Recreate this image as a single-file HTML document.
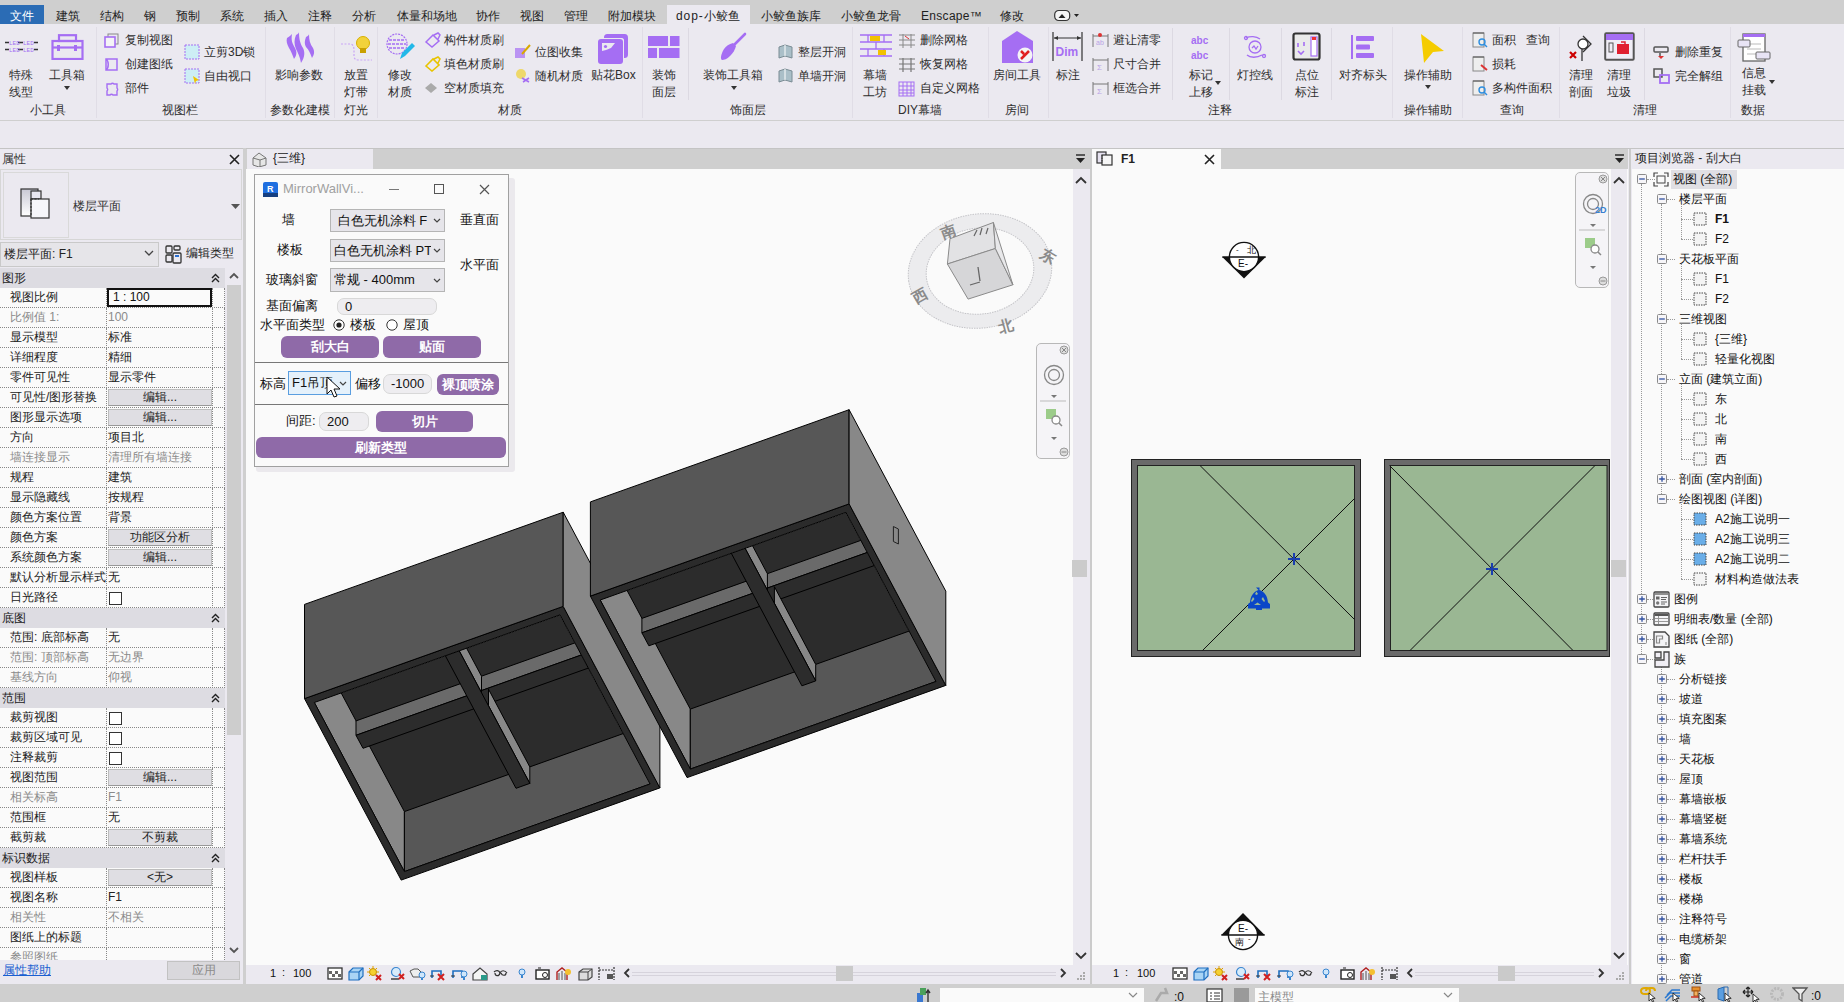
<!DOCTYPE html><html><head><meta charset="utf-8"><style>
html,body{margin:0;padding:0;width:1844px;height:1002px;overflow:hidden;background:#ebe9f0;}
body{position:relative;font-family:"Liberation Sans",sans-serif;font-size:12px;color:#1e1e1e;}
div,svg{position:absolute;}
.g{color:#8a8a8a}
.b{font-weight:bold}
</style></head><body>
<div style="left:0px;top:0px;width:1844px;height:24px;background:#cfcfcf"></div>
<div style="left:0px;top:5px;width:44px;height:19px;background:#2b6cb5"></div>
<div style="left:10px;top:8px;line-height:16px;color:#fff">文件</div>
<div style="left:667px;top:5px;width:83px;height:20px;background:#ebe9f0"></div>
<div style="left:56px;top:8px;line-height:16px;font-size:12px">建筑</div>
<div style="left:100px;top:8px;line-height:16px;font-size:12px">结构</div>
<div style="left:144px;top:8px;line-height:16px;font-size:12px">钢</div>
<div style="left:176px;top:8px;line-height:16px;font-size:12px">预制</div>
<div style="left:220px;top:8px;line-height:16px;font-size:12px">系统</div>
<div style="left:264px;top:8px;line-height:16px;font-size:12px">插入</div>
<div style="left:308px;top:8px;line-height:16px;font-size:12px">注释</div>
<div style="left:352px;top:8px;line-height:16px;font-size:12px">分析</div>
<div style="left:397px;top:8px;line-height:16px;font-size:12px">体量和场地</div>
<div style="left:476px;top:8px;line-height:16px;font-size:12px">协作</div>
<div style="left:520px;top:8px;line-height:16px;font-size:12px">视图</div>
<div style="left:564px;top:8px;line-height:16px;font-size:12px">管理</div>
<div style="left:608px;top:8px;line-height:16px;font-size:12px">附加模块</div>
<div style="left:676px;top:8px;line-height:16px;font-size:12px"><span style="letter-spacing:0.9px">dop-</span>小鲛鱼</div>
<div style="left:761px;top:8px;line-height:16px;font-size:12px">小鲛鱼族库</div>
<div style="left:841px;top:8px;line-height:16px;font-size:12px">小鲛鱼龙骨</div>
<div style="left:921px;top:8px;line-height:16px;font-size:12px"><span style="letter-spacing:0.3px">Enscape™</span></div>
<div style="left:1000px;top:8px;line-height:16px;font-size:12px">修改</div>
<div style="left:0px;top:120px;width:1844px;height:1px;background:#cfcfcf"></div>
<div style="left:0px;top:148px;width:1844px;height:1px;background:#c4c4c4"></div>
<svg style="left:1054px;top:8px" width="26" height="14" viewBox="0 0 26 14"><rect x="0.7" y="2.5" width="15" height="10" rx="4" fill="#f4f4f4" stroke="#333" stroke-width="1.2"/><path d="M4.5 10l3.5-4 3.5 4z" fill="#222"/><path d="M20 6h5l-2.5 3z" fill="#222"/></svg>
<svg style="left:4px;top:38px" width="34" height="16" viewBox="0 0 34 16"><g fill="none" stroke="#333" stroke-width="1.5"><path d="M1 4.5h4M14 4.5h5M30 4.5h4M1 11.5h4M14 11.5h5M30 11.5h4"/></g><g font-family="Liberation Mono" font-size="6" fill="#a56ef3"><text x="5" y="7">LED</text><text x="19" y="7">LED</text><text x="5" y="14">LED</text><text x="19" y="14">LED</text></g></svg>
<div style="left:9px;top:67px;line-height:16px;color:#2e2e2e">特殊</div>
<div style="left:9px;top:84px;line-height:16px;color:#2e2e2e">线型</div>
<svg style="left:51px;top:34px" width="33" height="26" viewBox="0 0 33 26"><g fill="none" stroke="#a56ef3" stroke-width="2.2"><rect x="1.5" y="7" width="30" height="18"/><rect x="8" y="1.2" width="17" height="5.8"/><path d="M1.5 13.5h30"/></g><rect x="6" y="11" width="3" height="6" fill="#a56ef3"/><rect x="23" y="11" width="3" height="6" fill="#a56ef3"/></svg>
<div style="left:49px;top:67px;line-height:16px;color:#2e2e2e">工具箱</div>
<svg style="left:64px;top:86px" width="6" height="4" viewBox="0 0 6 4"><path d="M0 0h6l-3 4z" fill="#333"/></svg>
<svg style="left:104px;top:33px" width="15" height="15" viewBox="0 0 15 15"><rect x="4" y="1" width="10" height="10" fill="none" stroke="#888" stroke-width="1"/><rect x="1" y="4" width="10" height="10" fill="#f4f3f6" stroke="#a56ef3" stroke-width="1.6"/></svg>
<div style="left:125px;top:32px;line-height:16px;color:#2e2e2e">复制视图</div>
<svg style="left:104px;top:57px" width="15" height="15" viewBox="0 0 15 15"><path d="M2 2h11v11H2z M2 2c3 2 3 9 0 11" fill="none" stroke="#a56ef3" stroke-width="1.5"/></svg>
<div style="left:125px;top:56px;line-height:16px;color:#2e2e2e">创建图纸</div>
<svg style="left:104px;top:81px" width="15" height="15" viewBox="0 0 15 15"><path d="M3 3h4a2 2 0 0 1 3 0h3v4a2 2 0 0 1 0 3v4h-4a2 2 0 0 0-3 0H3v-4a2 2 0 0 0 0-3z" fill="none" stroke="#a56ef3" stroke-width="1.4"/></svg>
<div style="left:125px;top:80px;line-height:16px;color:#2e2e2e">部件</div>
<svg style="left:184px;top:44px" width="16" height="16" viewBox="0 0 16 16"><rect x="1" y="1" width="14" height="14" fill="#cdeef5" stroke="#a56ef3" stroke-width="1" stroke-dasharray="2 1"/></svg>
<div style="left:204px;top:44px;line-height:16px;color:#2e2e2e">立剪3D锁</div>
<svg style="left:184px;top:68px" width="16" height="16" viewBox="0 0 16 16"><rect x="1" y="1" width="14" height="14" fill="#cdeef5" stroke="#a56ef3" stroke-width="1" stroke-dasharray="2 1"/><path d="M9 8l6 4-3 1-1 3z" fill="#f2c200"/></svg>
<div style="left:204px;top:68px;line-height:16px;color:#2e2e2e">自由视口</div>
<svg style="left:283px;top:32px" width="32" height="31" viewBox="0 0 32 31"><g fill="#a56ef3"><path d="M4 6c3-2 4-3 5-4-1 6 0 9 3 14 2 4 2 7-1 11-2-5-3-8-5-11-2-4-3-7-2-10z"/><path d="M13 3c2-1 3-2 3-3 0 7 1 11 4 16 2 4 2 9-2 15-1-6-3-10-5-14-2-5-2-9 0-14z"/><path d="M23 5c2-1 3-2 3-3 0 6 1 10 4 14 2 4 1 7-1 10-2-5-3-8-6-11-2-4-1-7 0-10z"/></g></svg>
<div style="left:275px;top:67px;line-height:16px;color:#2e2e2e">影响参数</div>
<svg style="left:340px;top:35px" width="33" height="27" viewBox="0 0 33 27"><path d="M1 9h9c3 0 4 3 4 6v6c0 3 2 4 5 4h13" fill="none" stroke="#c9a6f6" stroke-width="1.2" stroke-dasharray="2 1.5"/><circle cx="23" cy="8" r="6.5" fill="#f2d23a" stroke="#d8b000"/><rect x="20" y="13" width="6" height="5" fill="#c9a000"/></svg>
<div style="left:344px;top:67px;line-height:16px;color:#2e2e2e">放置</div>
<div style="left:344px;top:84px;line-height:16px;color:#2e2e2e">灯带</div>
<svg style="left:386px;top:33px" width="30" height="28" viewBox="0 0 30 28"><circle cx="11" cy="11" r="10" fill="none" stroke="#a56ef3" stroke-width="1.2" stroke-dasharray="2 1"/><path d="M3 7h16M2 11h18M3 15h16" stroke="#a56ef3" stroke-width="1.4" stroke-dasharray="3 1"/><path d="M14 26l2-6 10-10 3 3-10 10z" fill="#22b8e8"/></svg>
<div style="left:388px;top:67px;line-height:16px;color:#2e2e2e">修改</div>
<div style="left:388px;top:84px;line-height:16px;color:#2e2e2e">材质</div>
<svg style="left:424px;top:32px" width="17" height="16" viewBox="0 0 17 16"><path d="M2 10l7-7 6 6-7 6z M10 3l4-2 2 2-2 4" fill="none" stroke="#a56ef3" stroke-width="1.5"/></svg>
<div style="left:444px;top:32px;line-height:16px;color:#2e2e2e">构件材质刷</div>
<svg style="left:424px;top:56px" width="17" height="16" viewBox="0 0 17 16"><path d="M2 10l7-7 6 6-7 6z M10 3l4-2 2 2-2 4" fill="none" stroke="#e8c400" stroke-width="1.6"/></svg>
<div style="left:444px;top:56px;line-height:16px;color:#2e2e2e">填色材质刷</div>
<svg style="left:424px;top:82px" width="14" height="12" viewBox="0 0 14 12"><path d="M7 1l6 5-6 5-6-5z" fill="#aaa"/></svg>
<div style="left:444px;top:80px;line-height:16px;color:#2e2e2e">空材质填充</div>
<svg style="left:514px;top:44px" width="17" height="15" viewBox="0 0 17 15"><rect x="1" y="4" width="10" height="10" fill="#a56ef3" opacity=".7"/><path d="M8 10l8-9" stroke="#d8a800" stroke-width="2"/></svg>
<div style="left:535px;top:44px;line-height:16px;color:#2e2e2e">位图收集</div>
<svg style="left:514px;top:68px" width="17" height="15" viewBox="0 0 17 15"><circle cx="7" cy="6" r="5" fill="#eed86a"/><path d="M8 10l7 4M9 14l6-4" stroke="#a56ef3" stroke-width="1.6"/></svg>
<div style="left:535px;top:68px;line-height:16px;color:#2e2e2e">随机材质</div>
<svg style="left:597px;top:32px" width="32" height="32" viewBox="0 0 32 32"><path d="M7 6c0-3 1-4 4-4h16c3 0 4 1 4 4v16c0 3-1 4-4 4V8c0-1-1-2-2-2z" fill="#a56ef3"/><rect x="1" y="7" width="25" height="25" rx="3" fill="#a56ef3"/><path d="M5 11h13l-4 5c-2 1-3 1-5 2l-4 1z" fill="#ebe9f0"/><circle cx="8.5" cy="14.5" r="1.6" fill="#a56ef3"/></svg>
<div style="left:591px;top:67px;line-height:16px;color:#2e2e2e">贴花Box</div>
<svg style="left:648px;top:36px" width="32" height="23" viewBox="0 0 32 23"><g fill="#a56ef3"><rect x="0" y="0" width="20" height="10"/><rect x="22" y="0" width="9.5" height="10"/><rect x="0" y="12" width="9" height="10"/><rect x="11" y="12" width="20.5" height="10"/></g></svg>
<div style="left:652px;top:67px;line-height:16px;color:#2e2e2e">装饰</div>
<div style="left:652px;top:84px;line-height:16px;color:#2e2e2e">面层</div>
<svg style="left:719px;top:32px" width="28" height="30" viewBox="0 0 28 30"><path d="M3 28c-2-1-1-6 2-11 2-3 5-5 9-6l3 3c-1 4-3 7-6 10-3 3-6 4-8 4z" fill="#a56ef3"/><path d="M14 14L26 2" stroke="#a56ef3" stroke-width="2.6" stroke-linecap="round"/></svg>
<div style="left:703px;top:67px;line-height:16px;color:#2e2e2e">装饰工具箱</div>
<svg style="left:731px;top:86px" width="6" height="4" viewBox="0 0 6 4"><path d="M0 0h6l-3 4z" fill="#333"/></svg>
<svg style="left:778px;top:44px" width="15" height="15" viewBox="0 0 15 15"><path d="M1 3l6-2 7 2v11l-7-2-6 2z" fill="#aabfc8" stroke="#7a8c94"/><path d="M7 1v11" stroke="#fff"/></svg>
<div style="left:798px;top:44px;line-height:16px;color:#2e2e2e">整层开洞</div>
<svg style="left:778px;top:68px" width="15" height="15" viewBox="0 0 15 15"><path d="M1 3l6-2 7 2v11l-7-2-6 2z" fill="#aabfc8" stroke="#7a8c94"/><path d="M7 1v11" stroke="#fff"/></svg>
<div style="left:798px;top:68px;line-height:16px;color:#2e2e2e">单墙开洞</div>
<svg style="left:860px;top:33px" width="32" height="27" viewBox="0 0 32 27"><g stroke="#a56ef3" stroke-width="1.3" fill="none"><path d="M0 2h32M0 9h32M0 16h32M0 23h32M8 2v7M24 2v7M16 9v7M8 16v7M24 16v7"/></g><rect x="10" y="3" width="10" height="5" fill="#f2c200"/><rect x="18" y="17" width="8" height="5" fill="#f2c200"/></svg>
<div style="left:863px;top:67px;line-height:16px;color:#2e2e2e">幕墙</div>
<div style="left:863px;top:84px;line-height:16px;color:#2e2e2e">工坊</div>
<svg style="left:898px;top:33px" width="18" height="15" viewBox="0 0 18 15"><g stroke="#888" fill="none" stroke-width="1"><path d="M1 2h16M1 7h16M1 12h16M5 1v14M13 1v14"/></g><path d="M7 3l4 3" stroke="#d33"/></svg>
<div style="left:920px;top:32px;line-height:16px;color:#2e2e2e">删除网格</div>
<svg style="left:898px;top:57px" width="18" height="15" viewBox="0 0 18 15"><g stroke="#777" fill="none" stroke-width="1.2"><path d="M1 2h16M1 7h16M1 12h16M5 1v14M13 1v14"/></g></svg>
<div style="left:920px;top:56px;line-height:16px;color:#2e2e2e">恢复网格</div>
<svg style="left:898px;top:81px" width="18" height="16" viewBox="0 0 18 16"><g stroke="#a56ef3" fill="none" stroke-width="1"><rect x="1" y="1" width="15" height="14"/><path d="M1 5h15M1 9h15M1 12h15M5 1v14M9 1v14M13 1v14"/></g></svg>
<div style="left:920px;top:80px;line-height:16px;color:#2e2e2e">自定义网格</div>
<svg style="left:1000px;top:30px" width="34" height="33" viewBox="0 0 34 33"><path d="M17 1L33 11v22H2V11z" fill="#a56ef3"/><circle cx="25" cy="25" r="7.5" fill="#f4f3f6"/><path d="M21 29l8-8M21 21l3 3" stroke="#e02020" stroke-width="2.5"/></svg>
<div style="left:993px;top:67px;line-height:16px;color:#2e2e2e">房间工具</div>
<svg style="left:1052px;top:31px" width="31" height="30" viewBox="0 0 31 30"><path d="M1 1v29M30 1v29M2 7h27" stroke="#333" stroke-width="1.2" fill="none"/><path d="M2 7l4-2v4zM29 7l-4-2v4z" fill="#333"/><text x="3.5" y="25" font-family="Liberation Sans" font-weight="bold" font-size="12" fill="#a56ef3">Dim</text></svg>
<div style="left:1056px;top:67px;line-height:16px;color:#2e2e2e">标注</div>
<svg style="left:1092px;top:32px" width="17" height="16" viewBox="0 0 17 16"><path d="M1 2v13M16 2v13M1 4h15" stroke="#777" fill="none"/><circle cx="8" cy="3" r="2" fill="#d33"/><text x="4" y="13" font-size="7" fill="#b9a3e6">ab</text></svg>
<div style="left:1113px;top:32px;line-height:16px;color:#2e2e2e">避让清零</div>
<svg style="left:1092px;top:56px" width="17" height="16" viewBox="0 0 17 16"><path d="M1 2v13M16 2v13M1 4h15" stroke="#777" fill="none"/><text x="5" y="14" font-size="8" fill="#b9a3e6">Σ</text></svg>
<div style="left:1113px;top:56px;line-height:16px;color:#2e2e2e">尺寸合并</div>
<svg style="left:1092px;top:80px" width="17" height="16" viewBox="0 0 17 16"><path d="M1 2v13M16 2v13M1 4h15" stroke="#777" fill="none"/><text x="5" y="14" font-size="8" fill="#b9a3e6">Σ</text></svg>
<div style="left:1113px;top:80px;line-height:16px;color:#2e2e2e">框选合并</div>
<svg style="left:1191px;top:33px" width="20" height="28" viewBox="0 0 20 28"><g font-family="Liberation Sans" font-weight="bold" font-size="10" fill="#a56ef3"><text x="0" y="11">abc</text><text x="0" y="26">abc</text></g></svg>
<div style="left:1189px;top:67px;line-height:16px;color:#2e2e2e">标记</div>
<div style="left:1189px;top:84px;line-height:16px;color:#2e2e2e">上移</div>
<svg style="left:1215px;top:81px" width="6" height="4" viewBox="0 0 6 4"><path d="M0 0h6l-3 4z" fill="#333"/></svg>
<svg style="left:1243px;top:35px" width="24" height="24" viewBox="0 0 24 24"><g fill="none" stroke="#a56ef3" stroke-width="1.3"><circle cx="12" cy="12" r="6"/><path d="M3 3c4-2 10-2 14 1M4 20c3 3 10 3 15 0"/><circle cx="3" cy="3" r="1.5"/><circle cx="21" cy="21" r="1.5"/><path d="M9 13l2-2 2 3 2-3"/></g></svg>
<div style="left:1237px;top:67px;line-height:16px;color:#2e2e2e">灯控线</div>
<svg style="left:1292px;top:32px" width="29" height="29" viewBox="0 0 29 29"><rect x="1.5" y="1.5" width="26" height="26" rx="2" fill="#eaeaea" stroke="#333" stroke-width="2.2"/><rect x="19" y="5" width="6" height="19" fill="#fff" stroke="#a56ef3" stroke-width="1.2"/><rect x="20" y="5" width="4" height="3" fill="#e33"/><path d="M6 11v4M12 10v4M6 19l3 3 3-3" stroke="#a56ef3" stroke-width="1.6" fill="none"/></svg>
<div style="left:1295px;top:67px;line-height:16px;color:#2e2e2e">点位</div>
<div style="left:1295px;top:84px;line-height:16px;color:#2e2e2e">标注</div>
<svg style="left:1351px;top:35px" width="24" height="24" viewBox="0 0 24 24"><rect x="0" y="0" width="2" height="24" fill="#a56ef3"/><g fill="#a56ef3"><rect x="5" y="1" width="18" height="5" rx="1"/><rect x="5" y="9.5" width="14" height="5" rx="1"/><rect x="5" y="18" width="18" height="5" rx="1"/></g></svg>
<div style="left:1339px;top:67px;line-height:16px;color:#2e2e2e">对齐标头</div>
<svg style="left:1420px;top:33px" width="25" height="30" viewBox="0 0 25 30"><path d="M1 1l23 17-11 1-9 11z" fill="#f5cc00"/></svg>
<div style="left:1404px;top:67px;line-height:16px;color:#2e2e2e">操作辅助</div>
<svg style="left:1425px;top:85px" width="6" height="4" viewBox="0 0 6 4"><path d="M0 0h6l-3 4z" fill="#333"/></svg>
<svg style="left:1472px;top:32px" width="16" height="16" viewBox="0 0 16 16"><rect x="1" y="1" width="11" height="14" fill="#eee" stroke="#888"/><path d="M1 1h11" stroke="#555"/><circle cx="10" cy="10" r="3" fill="none" stroke="#2e8ee0" stroke-width="1.4"/><path d="M12 12l3 3" stroke="#2e8ee0" stroke-width="1.4"/></svg>
<div style="left:1492px;top:32px;line-height:16px;color:#2e2e2e">面积&nbsp;&nbsp;&nbsp;查询</div>
<svg style="left:1472px;top:56px" width="16" height="16" viewBox="0 0 16 16"><rect x="1" y="1" width="11" height="14" fill="#eee" stroke="#888"/><path d="M1 1h11" stroke="#555"/><path d="M9 9l6 5" stroke="#d33" stroke-width="2"/></svg>
<div style="left:1492px;top:56px;line-height:16px;color:#2e2e2e">损耗</div>
<svg style="left:1472px;top:80px" width="16" height="16" viewBox="0 0 16 16"><rect x="1" y="1" width="11" height="14" fill="#eee" stroke="#888"/><path d="M1 1h11" stroke="#555"/><circle cx="10" cy="10" r="3" fill="none" stroke="#2e8ee0" stroke-width="1.4"/><path d="M12 12l3 3" stroke="#2e8ee0" stroke-width="1.4"/></svg>
<div style="left:1492px;top:80px;line-height:16px;color:#2e2e2e">多构件面积</div>
<svg style="left:1568px;top:34px" width="26" height="27" viewBox="0 0 26 27"><circle cx="15" cy="10" r="5" fill="#fff" stroke="#333" stroke-width="1.3"/><path d="M15 2l8 8-8 8" fill="none" stroke="#333" stroke-width="1.3"/><path d="M14 15v12" stroke="#333" stroke-width="1.3"/><path d="M2 18l6 6M8 18l-6 6" stroke="#c00" stroke-width="2.2"/></svg>
<div style="left:1569px;top:67px;line-height:16px;color:#2e2e2e">清理</div>
<div style="left:1569px;top:84px;line-height:16px;color:#2e2e2e">剖面</div>
<svg style="left:1604px;top:32px" width="31" height="29" viewBox="0 0 31 29"><rect x="1.2" y="1.2" width="28.5" height="26.5" rx="1" fill="#f0eef6" stroke="#555" stroke-width="2"/><rect x="2" y="2" width="27" height="6" fill="#a56ef3"/><rect x="5" y="11" width="4" height="9" fill="none" stroke="#555"/><rect x="13" y="12" width="12" height="10" fill="#e02030"/><path d="M17 10h4v3" fill="none" stroke="#e02030" stroke-width="1.5"/></svg>
<div style="left:1607px;top:67px;line-height:16px;color:#2e2e2e">清理</div>
<div style="left:1607px;top:84px;line-height:16px;color:#2e2e2e">垃圾</div>
<svg style="left:1653px;top:45px" width="18" height="14" viewBox="0 0 18 14"><rect x="1" y="2" width="14" height="5" rx="1" fill="none" stroke="#555" stroke-width="1.5"/><path d="M7 8v4" stroke="#555" stroke-width="1.5"/><path d="M5 11l3 3 3-3" fill="#d33"/></svg>
<div style="left:1675px;top:44px;line-height:16px;color:#2e2e2e">删除重复</div>
<svg style="left:1653px;top:68px" width="18" height="16" viewBox="0 0 18 16"><rect x="1" y="1" width="8" height="8" fill="none" stroke="#555" stroke-width="1.5"/><rect x="7" y="7" width="9" height="8" fill="none" stroke="#a56ef3" stroke-width="1.8"/></svg>
<div style="left:1675px;top:68px;line-height:16px;color:#2e2e2e">完全解组</div>
<svg style="left:1737px;top:32px" width="34" height="30" viewBox="0 0 34 30"><rect x="6" y="2" width="22" height="27" fill="#fff" stroke="#666" stroke-width="1.3"/><rect x="6" y="2" width="22" height="3" fill="#a56ef3"/><path d="M10 12h14M10 17h14M10 22h14" stroke="#bbb"/><rect x="1" y="8" width="12" height="7" rx="1" fill="#e8e4f5" stroke="#666"/><rect x="19" y="20" width="14" height="7" rx="1" fill="#e8e4f5" stroke="#666"/></svg>
<div style="left:1742px;top:65px;line-height:16px;color:#2e2e2e">信息</div>
<div style="left:1742px;top:82px;line-height:16px;color:#2e2e2e">挂载</div>
<svg style="left:1769px;top:80px" width="6" height="4" viewBox="0 0 6 4"><path d="M0 0h6l-3 4z" fill="#333"/></svg>
<div style="left:30px;top:102px;line-height:16px;color:#2e2e2e">小工具</div>
<div style="left:162px;top:102px;line-height:16px;color:#2e2e2e">视图栏</div>
<div style="left:270px;top:102px;line-height:16px;color:#2e2e2e">参数化建模</div>
<div style="left:344px;top:102px;line-height:16px;color:#2e2e2e">灯光</div>
<div style="left:498px;top:102px;line-height:16px;color:#2e2e2e">材质</div>
<div style="left:730px;top:102px;line-height:16px;color:#2e2e2e">饰面层</div>
<div style="left:898px;top:102px;line-height:16px;color:#2e2e2e">DIY幕墙</div>
<div style="left:1005px;top:102px;line-height:16px;color:#2e2e2e">房间</div>
<div style="left:1208px;top:102px;line-height:16px;color:#2e2e2e">注释</div>
<div style="left:1404px;top:102px;line-height:16px;color:#2e2e2e">操作辅助</div>
<div style="left:1500px;top:102px;line-height:16px;color:#2e2e2e">查询</div>
<div style="left:1633px;top:102px;line-height:16px;color:#2e2e2e">清理</div>
<div style="left:1741px;top:102px;line-height:16px;color:#2e2e2e">数据</div>
<div style="left:96px;top:27px;width:1px;height:91px;background:#e0dde6"></div>
<div style="left:265px;top:27px;width:1px;height:91px;background:#e0dde6"></div>
<div style="left:334px;top:27px;width:1px;height:91px;background:#e0dde6"></div>
<div style="left:377px;top:27px;width:1px;height:91px;background:#e0dde6"></div>
<div style="left:642px;top:27px;width:1px;height:91px;background:#e0dde6"></div>
<div style="left:852px;top:27px;width:1px;height:91px;background:#e0dde6"></div>
<div style="left:988px;top:27px;width:1px;height:91px;background:#e0dde6"></div>
<div style="left:1048px;top:27px;width:1px;height:91px;background:#e0dde6"></div>
<div style="left:1392px;top:27px;width:1px;height:91px;background:#e0dde6"></div>
<div style="left:1462px;top:27px;width:1px;height:91px;background:#e0dde6"></div>
<div style="left:1559px;top:27px;width:1px;height:91px;background:#e0dde6"></div>
<div style="left:1730px;top:27px;width:1px;height:91px;background:#e0dde6"></div>
<div style="left:688px;top:28px;width:1px;height:72px;background:#dcd9e2"></div>
<div style="left:1172px;top:28px;width:1px;height:72px;background:#dcd9e2"></div>
<div style="left:1229px;top:28px;width:1px;height:72px;background:#dcd9e2"></div>
<div style="left:1281px;top:28px;width:1px;height:72px;background:#dcd9e2"></div>
<div style="left:1331px;top:28px;width:1px;height:72px;background:#dcd9e2"></div>
<div style="left:1644px;top:28px;width:1px;height:72px;background:#dcd9e2"></div>
<div style="left:2px;top:151px;line-height:16px;color:#333">属性</div>
<svg style="left:229px;top:154px" width="11" height="11" viewBox="0 0 11 11"><path d="M1 1l9 9M10 1l-9 9" stroke="#222" stroke-width="1.6"/></svg>
<div style="left:0px;top:169px;width:242px;height:71px;border:1px solid #d6d6d6;box-sizing:border-box"></div>
<div style="left:3px;top:172px;width:66px;height:66px;border:1px solid #d9d9d9;box-sizing:border-box"></div>
<svg style="left:20px;top:188px" width="31" height="32" viewBox="0 0 31 32"><defs><linearGradient id="gA" x1="0" y1="0" x2="0" y2="1"><stop offset="0" stop-color="#c8c8d4"/><stop offset="1" stop-color="#fff"/></linearGradient></defs><rect x="1" y="1" width="17" height="27" fill="url(#gA)" stroke="#333" stroke-width="1.2"/><rect x="11" y="3" width="10" height="8" fill="#e8e6f0" stroke="#333" stroke-width="1.2"/><rect x="11" y="11" width="18" height="19" fill="#f6f6fa" stroke="#333" stroke-width="1.2"/><path d="M11 11v17M11 11h8" stroke="#333" stroke-dasharray="2 1.5" stroke-width="1.2"/></svg>
<div style="left:73px;top:198px;line-height:16px;color:#333">楼层平面</div>
<svg style="left:231px;top:204px" width="9" height="5" viewBox="0 0 9 5"><path d="M0 0h9l-4.5 5z" fill="#555"/></svg>
<div style="left:0px;top:242px;width:159px;height:25px;background:#e6e5e9;border:1px solid #c9c9c9;box-sizing:border-box"></div>
<div style="left:4px;top:246px;line-height:16px;color:#222">楼层平面: F1</div>
<svg style="left:144px;top:250px" width="10" height="6" viewBox="0 0 10 6"><path d="M1 1l4 4 4-4" fill="none" stroke="#444" stroke-width="1.3"/></svg>
<svg style="left:165px;top:245px" width="17" height="19" viewBox="0 0 17 19"><g fill="none" stroke="#333" stroke-width="1.3"><rect x="1" y="1" width="6" height="7" rx="1"/><rect x="9" y="1" width="6" height="4" rx="1"/><rect x="1" y="10" width="6" height="7" rx="1"/><rect x="8" y="8" width="8" height="10" rx="1"/></g><rect x="10" y="10" width="4" height="2" fill="#2a6fd0"/></svg>
<div style="left:186px;top:245px;line-height:16px;color:#222">编辑类型</div>
<div style="left:0px;top:268px;width:225px;height:693px;background:#fafafa"></div>
<div style="left:0px;top:268px;width:225px;height:20px;background:#dddce2"></div>
<div style="left:2px;top:270px;line-height:16px;color:#222">图形</div>
<svg style="left:211px;top:273px" width="9" height="10" viewBox="0 0 9 10"><path d="M1 5l3.5-3.5L8 5M1 9l3.5-3.5L8 9" fill="none" stroke="#222" stroke-width="1.4"/></svg>
<div style="left:0;top:307px;width:225px;height:0;border-top:1px dotted #888"></div>
<div style="left:106px;top:288px;width:0;height:20px;border-left:1px dotted #888"></div>
<div style="left:212px;top:288px;width:0;height:20px;border-left:1px dotted #888"></div>
<div style="left:224px;top:288px;width:0;height:20px;border-left:1px dotted #888"></div>
<div style="left:10px;top:289px;line-height:16px;color:#222">视图比例</div>
<div style="left:107px;top:288px;width:105px;height:19px;background:#fafafa;border:2px solid #111;box-sizing:border-box"></div>
<div style="left:113px;top:289px;line-height:16px;color:#111">1 : 100</div>
<div style="left:0;top:327px;width:225px;height:0;border-top:1px dotted #888"></div>
<div style="left:106px;top:308px;width:0;height:20px;border-left:1px dotted #888"></div>
<div style="left:212px;top:308px;width:0;height:20px;border-left:1px dotted #888"></div>
<div style="left:224px;top:308px;width:0;height:20px;border-left:1px dotted #888"></div>
<div style="left:10px;top:309px;line-height:16px;color:#8a8a8a">比例值 1:</div>
<div style="left:108px;top:309px;line-height:16px;color:#8a8a8a">100</div>
<div style="left:0;top:347px;width:225px;height:0;border-top:1px dotted #888"></div>
<div style="left:106px;top:328px;width:0;height:20px;border-left:1px dotted #888"></div>
<div style="left:212px;top:328px;width:0;height:20px;border-left:1px dotted #888"></div>
<div style="left:224px;top:328px;width:0;height:20px;border-left:1px dotted #888"></div>
<div style="left:10px;top:329px;line-height:16px;color:#222">显示模型</div>
<div style="left:108px;top:329px;line-height:16px;color:#222">标准</div>
<div style="left:0;top:367px;width:225px;height:0;border-top:1px dotted #888"></div>
<div style="left:106px;top:348px;width:0;height:20px;border-left:1px dotted #888"></div>
<div style="left:212px;top:348px;width:0;height:20px;border-left:1px dotted #888"></div>
<div style="left:224px;top:348px;width:0;height:20px;border-left:1px dotted #888"></div>
<div style="left:10px;top:349px;line-height:16px;color:#222">详细程度</div>
<div style="left:108px;top:349px;line-height:16px;color:#222">精细</div>
<div style="left:0;top:387px;width:225px;height:0;border-top:1px dotted #888"></div>
<div style="left:106px;top:368px;width:0;height:20px;border-left:1px dotted #888"></div>
<div style="left:212px;top:368px;width:0;height:20px;border-left:1px dotted #888"></div>
<div style="left:224px;top:368px;width:0;height:20px;border-left:1px dotted #888"></div>
<div style="left:10px;top:369px;line-height:16px;color:#222">零件可见性</div>
<div style="left:108px;top:369px;line-height:16px;color:#222">显示零件</div>
<div style="left:0;top:407px;width:225px;height:0;border-top:1px dotted #888"></div>
<div style="left:106px;top:388px;width:0;height:20px;border-left:1px dotted #888"></div>
<div style="left:212px;top:388px;width:0;height:20px;border-left:1px dotted #888"></div>
<div style="left:224px;top:388px;width:0;height:20px;border-left:1px dotted #888"></div>
<div style="left:10px;top:389px;line-height:16px;color:#222">可见性/图形替换</div>
<div style="left:108px;top:389px;width:104px;height:17px;background:#dfdee3;border:1px solid #bdbdbd;border-bottom-color:#999;box-sizing:border-box"></div>
<div style="left:108px;top:389px;width:104px;line-height:17px;text-align:center;color:#222">编辑...</div>
<div style="left:0;top:427px;width:225px;height:0;border-top:1px dotted #888"></div>
<div style="left:106px;top:408px;width:0;height:20px;border-left:1px dotted #888"></div>
<div style="left:212px;top:408px;width:0;height:20px;border-left:1px dotted #888"></div>
<div style="left:224px;top:408px;width:0;height:20px;border-left:1px dotted #888"></div>
<div style="left:10px;top:409px;line-height:16px;color:#222">图形显示选项</div>
<div style="left:108px;top:409px;width:104px;height:17px;background:#dfdee3;border:1px solid #bdbdbd;border-bottom-color:#999;box-sizing:border-box"></div>
<div style="left:108px;top:409px;width:104px;line-height:17px;text-align:center;color:#222">编辑...</div>
<div style="left:0;top:447px;width:225px;height:0;border-top:1px dotted #888"></div>
<div style="left:106px;top:428px;width:0;height:20px;border-left:1px dotted #888"></div>
<div style="left:212px;top:428px;width:0;height:20px;border-left:1px dotted #888"></div>
<div style="left:224px;top:428px;width:0;height:20px;border-left:1px dotted #888"></div>
<div style="left:10px;top:429px;line-height:16px;color:#222">方向</div>
<div style="left:108px;top:429px;line-height:16px;color:#222">项目北</div>
<div style="left:0;top:467px;width:225px;height:0;border-top:1px dotted #888"></div>
<div style="left:106px;top:448px;width:0;height:20px;border-left:1px dotted #888"></div>
<div style="left:212px;top:448px;width:0;height:20px;border-left:1px dotted #888"></div>
<div style="left:224px;top:448px;width:0;height:20px;border-left:1px dotted #888"></div>
<div style="left:10px;top:449px;line-height:16px;color:#8a8a8a">墙连接显示</div>
<div style="left:108px;top:449px;line-height:16px;color:#8a8a8a">清理所有墙连接</div>
<div style="left:0;top:487px;width:225px;height:0;border-top:1px dotted #888"></div>
<div style="left:106px;top:468px;width:0;height:20px;border-left:1px dotted #888"></div>
<div style="left:212px;top:468px;width:0;height:20px;border-left:1px dotted #888"></div>
<div style="left:224px;top:468px;width:0;height:20px;border-left:1px dotted #888"></div>
<div style="left:10px;top:469px;line-height:16px;color:#222">规程</div>
<div style="left:108px;top:469px;line-height:16px;color:#222">建筑</div>
<div style="left:0;top:507px;width:225px;height:0;border-top:1px dotted #888"></div>
<div style="left:106px;top:488px;width:0;height:20px;border-left:1px dotted #888"></div>
<div style="left:212px;top:488px;width:0;height:20px;border-left:1px dotted #888"></div>
<div style="left:224px;top:488px;width:0;height:20px;border-left:1px dotted #888"></div>
<div style="left:10px;top:489px;line-height:16px;color:#222">显示隐藏线</div>
<div style="left:108px;top:489px;line-height:16px;color:#222">按规程</div>
<div style="left:0;top:527px;width:225px;height:0;border-top:1px dotted #888"></div>
<div style="left:106px;top:508px;width:0;height:20px;border-left:1px dotted #888"></div>
<div style="left:212px;top:508px;width:0;height:20px;border-left:1px dotted #888"></div>
<div style="left:224px;top:508px;width:0;height:20px;border-left:1px dotted #888"></div>
<div style="left:10px;top:509px;line-height:16px;color:#222">颜色方案位置</div>
<div style="left:108px;top:509px;line-height:16px;color:#222">背景</div>
<div style="left:0;top:547px;width:225px;height:0;border-top:1px dotted #888"></div>
<div style="left:106px;top:528px;width:0;height:20px;border-left:1px dotted #888"></div>
<div style="left:212px;top:528px;width:0;height:20px;border-left:1px dotted #888"></div>
<div style="left:224px;top:528px;width:0;height:20px;border-left:1px dotted #888"></div>
<div style="left:10px;top:529px;line-height:16px;color:#222">颜色方案</div>
<div style="left:108px;top:529px;width:104px;height:17px;background:#dfdee3;border:1px solid #bdbdbd;border-bottom-color:#999;box-sizing:border-box"></div>
<div style="left:108px;top:529px;width:104px;line-height:17px;text-align:center;color:#222">功能区分析</div>
<div style="left:0;top:567px;width:225px;height:0;border-top:1px dotted #888"></div>
<div style="left:106px;top:548px;width:0;height:20px;border-left:1px dotted #888"></div>
<div style="left:212px;top:548px;width:0;height:20px;border-left:1px dotted #888"></div>
<div style="left:224px;top:548px;width:0;height:20px;border-left:1px dotted #888"></div>
<div style="left:10px;top:549px;line-height:16px;color:#222">系统颜色方案</div>
<div style="left:108px;top:549px;width:104px;height:17px;background:#dfdee3;border:1px solid #bdbdbd;border-bottom-color:#999;box-sizing:border-box"></div>
<div style="left:108px;top:549px;width:104px;line-height:17px;text-align:center;color:#222">编辑...</div>
<div style="left:0;top:587px;width:225px;height:0;border-top:1px dotted #888"></div>
<div style="left:106px;top:568px;width:0;height:20px;border-left:1px dotted #888"></div>
<div style="left:212px;top:568px;width:0;height:20px;border-left:1px dotted #888"></div>
<div style="left:224px;top:568px;width:0;height:20px;border-left:1px dotted #888"></div>
<div style="left:10px;top:569px;line-height:16px;color:#222">默认分析显示样式</div>
<div style="left:108px;top:569px;line-height:16px;color:#222">无</div>
<div style="left:0;top:607px;width:225px;height:0;border-top:1px dotted #888"></div>
<div style="left:106px;top:588px;width:0;height:20px;border-left:1px dotted #888"></div>
<div style="left:212px;top:588px;width:0;height:20px;border-left:1px dotted #888"></div>
<div style="left:224px;top:588px;width:0;height:20px;border-left:1px dotted #888"></div>
<div style="left:10px;top:589px;line-height:16px;color:#222">日光路径</div>
<div style="left:109px;top:592px;width:13px;height:13px;background:#fff;border:1px solid #333;box-sizing:border-box"></div>
<div style="left:0px;top:608px;width:225px;height:20px;background:#dddce2"></div>
<div style="left:2px;top:610px;line-height:16px;color:#222">底图</div>
<svg style="left:211px;top:613px" width="9" height="10" viewBox="0 0 9 10"><path d="M1 5l3.5-3.5L8 5M1 9l3.5-3.5L8 9" fill="none" stroke="#222" stroke-width="1.4"/></svg>
<div style="left:0;top:647px;width:225px;height:0;border-top:1px dotted #888"></div>
<div style="left:106px;top:628px;width:0;height:20px;border-left:1px dotted #888"></div>
<div style="left:212px;top:628px;width:0;height:20px;border-left:1px dotted #888"></div>
<div style="left:224px;top:628px;width:0;height:20px;border-left:1px dotted #888"></div>
<div style="left:10px;top:629px;line-height:16px;color:#222">范围: 底部标高</div>
<div style="left:108px;top:629px;line-height:16px;color:#222">无</div>
<div style="left:0;top:667px;width:225px;height:0;border-top:1px dotted #888"></div>
<div style="left:106px;top:648px;width:0;height:20px;border-left:1px dotted #888"></div>
<div style="left:212px;top:648px;width:0;height:20px;border-left:1px dotted #888"></div>
<div style="left:224px;top:648px;width:0;height:20px;border-left:1px dotted #888"></div>
<div style="left:10px;top:649px;line-height:16px;color:#8a8a8a">范围: 顶部标高</div>
<div style="left:108px;top:649px;line-height:16px;color:#8a8a8a">无边界</div>
<div style="left:0;top:687px;width:225px;height:0;border-top:1px dotted #888"></div>
<div style="left:106px;top:668px;width:0;height:20px;border-left:1px dotted #888"></div>
<div style="left:212px;top:668px;width:0;height:20px;border-left:1px dotted #888"></div>
<div style="left:224px;top:668px;width:0;height:20px;border-left:1px dotted #888"></div>
<div style="left:10px;top:669px;line-height:16px;color:#8a8a8a">基线方向</div>
<div style="left:108px;top:669px;line-height:16px;color:#8a8a8a">仰视</div>
<div style="left:0px;top:688px;width:225px;height:20px;background:#dddce2"></div>
<div style="left:2px;top:690px;line-height:16px;color:#222">范围</div>
<svg style="left:211px;top:693px" width="9" height="10" viewBox="0 0 9 10"><path d="M1 5l3.5-3.5L8 5M1 9l3.5-3.5L8 9" fill="none" stroke="#222" stroke-width="1.4"/></svg>
<div style="left:0;top:727px;width:225px;height:0;border-top:1px dotted #888"></div>
<div style="left:106px;top:708px;width:0;height:20px;border-left:1px dotted #888"></div>
<div style="left:212px;top:708px;width:0;height:20px;border-left:1px dotted #888"></div>
<div style="left:224px;top:708px;width:0;height:20px;border-left:1px dotted #888"></div>
<div style="left:10px;top:709px;line-height:16px;color:#222">裁剪视图</div>
<div style="left:109px;top:712px;width:13px;height:13px;background:#fff;border:1px solid #333;box-sizing:border-box"></div>
<div style="left:0;top:747px;width:225px;height:0;border-top:1px dotted #888"></div>
<div style="left:106px;top:728px;width:0;height:20px;border-left:1px dotted #888"></div>
<div style="left:212px;top:728px;width:0;height:20px;border-left:1px dotted #888"></div>
<div style="left:224px;top:728px;width:0;height:20px;border-left:1px dotted #888"></div>
<div style="left:10px;top:729px;line-height:16px;color:#222">裁剪区域可见</div>
<div style="left:109px;top:732px;width:13px;height:13px;background:#fff;border:1px solid #333;box-sizing:border-box"></div>
<div style="left:0;top:767px;width:225px;height:0;border-top:1px dotted #888"></div>
<div style="left:106px;top:748px;width:0;height:20px;border-left:1px dotted #888"></div>
<div style="left:212px;top:748px;width:0;height:20px;border-left:1px dotted #888"></div>
<div style="left:224px;top:748px;width:0;height:20px;border-left:1px dotted #888"></div>
<div style="left:10px;top:749px;line-height:16px;color:#222">注释裁剪</div>
<div style="left:109px;top:752px;width:13px;height:13px;background:#fff;border:1px solid #333;box-sizing:border-box"></div>
<div style="left:0;top:787px;width:225px;height:0;border-top:1px dotted #888"></div>
<div style="left:106px;top:768px;width:0;height:20px;border-left:1px dotted #888"></div>
<div style="left:212px;top:768px;width:0;height:20px;border-left:1px dotted #888"></div>
<div style="left:224px;top:768px;width:0;height:20px;border-left:1px dotted #888"></div>
<div style="left:10px;top:769px;line-height:16px;color:#222">视图范围</div>
<div style="left:108px;top:769px;width:104px;height:17px;background:#dfdee3;border:1px solid #bdbdbd;border-bottom-color:#999;box-sizing:border-box"></div>
<div style="left:108px;top:769px;width:104px;line-height:17px;text-align:center;color:#222">编辑...</div>
<div style="left:0;top:807px;width:225px;height:0;border-top:1px dotted #888"></div>
<div style="left:106px;top:788px;width:0;height:20px;border-left:1px dotted #888"></div>
<div style="left:212px;top:788px;width:0;height:20px;border-left:1px dotted #888"></div>
<div style="left:224px;top:788px;width:0;height:20px;border-left:1px dotted #888"></div>
<div style="left:10px;top:789px;line-height:16px;color:#8a8a8a">相关标高</div>
<div style="left:108px;top:789px;line-height:16px;color:#8a8a8a">F1</div>
<div style="left:0;top:827px;width:225px;height:0;border-top:1px dotted #888"></div>
<div style="left:106px;top:808px;width:0;height:20px;border-left:1px dotted #888"></div>
<div style="left:212px;top:808px;width:0;height:20px;border-left:1px dotted #888"></div>
<div style="left:224px;top:808px;width:0;height:20px;border-left:1px dotted #888"></div>
<div style="left:10px;top:809px;line-height:16px;color:#222">范围框</div>
<div style="left:108px;top:809px;line-height:16px;color:#222">无</div>
<div style="left:0;top:847px;width:225px;height:0;border-top:1px dotted #888"></div>
<div style="left:106px;top:828px;width:0;height:20px;border-left:1px dotted #888"></div>
<div style="left:212px;top:828px;width:0;height:20px;border-left:1px dotted #888"></div>
<div style="left:224px;top:828px;width:0;height:20px;border-left:1px dotted #888"></div>
<div style="left:10px;top:829px;line-height:16px;color:#222">截剪裁</div>
<div style="left:108px;top:829px;width:104px;height:17px;background:#dfdee3;border:1px solid #bdbdbd;border-bottom-color:#999;box-sizing:border-box"></div>
<div style="left:108px;top:829px;width:104px;line-height:17px;text-align:center;color:#222">不剪裁</div>
<div style="left:0px;top:848px;width:225px;height:20px;background:#dddce2"></div>
<div style="left:2px;top:850px;line-height:16px;color:#222">标识数据</div>
<svg style="left:211px;top:853px" width="9" height="10" viewBox="0 0 9 10"><path d="M1 5l3.5-3.5L8 5M1 9l3.5-3.5L8 9" fill="none" stroke="#222" stroke-width="1.4"/></svg>
<div style="left:0;top:887px;width:225px;height:0;border-top:1px dotted #888"></div>
<div style="left:106px;top:868px;width:0;height:20px;border-left:1px dotted #888"></div>
<div style="left:212px;top:868px;width:0;height:20px;border-left:1px dotted #888"></div>
<div style="left:224px;top:868px;width:0;height:20px;border-left:1px dotted #888"></div>
<div style="left:10px;top:869px;line-height:16px;color:#222">视图样板</div>
<div style="left:108px;top:869px;width:104px;height:17px;background:#dfdee3;border:1px solid #bdbdbd;border-bottom-color:#999;box-sizing:border-box"></div>
<div style="left:108px;top:869px;width:104px;line-height:17px;text-align:center;color:#222">&lt;无&gt;</div>
<div style="left:0;top:907px;width:225px;height:0;border-top:1px dotted #888"></div>
<div style="left:106px;top:888px;width:0;height:20px;border-left:1px dotted #888"></div>
<div style="left:212px;top:888px;width:0;height:20px;border-left:1px dotted #888"></div>
<div style="left:224px;top:888px;width:0;height:20px;border-left:1px dotted #888"></div>
<div style="left:10px;top:889px;line-height:16px;color:#222">视图名称</div>
<div style="left:108px;top:889px;line-height:16px;color:#222">F1</div>
<div style="left:0;top:927px;width:225px;height:0;border-top:1px dotted #888"></div>
<div style="left:106px;top:908px;width:0;height:20px;border-left:1px dotted #888"></div>
<div style="left:212px;top:908px;width:0;height:20px;border-left:1px dotted #888"></div>
<div style="left:224px;top:908px;width:0;height:20px;border-left:1px dotted #888"></div>
<div style="left:10px;top:909px;line-height:16px;color:#8a8a8a">相关性</div>
<div style="left:108px;top:909px;line-height:16px;color:#8a8a8a">不相关</div>
<div style="left:0;top:947px;width:225px;height:0;border-top:1px dotted #888"></div>
<div style="left:106px;top:928px;width:0;height:20px;border-left:1px dotted #888"></div>
<div style="left:212px;top:928px;width:0;height:20px;border-left:1px dotted #888"></div>
<div style="left:224px;top:928px;width:0;height:20px;border-left:1px dotted #888"></div>
<div style="left:10px;top:929px;line-height:16px;color:#222">图纸上的标题</div>
<div style="left:108px;top:929px;line-height:16px;color:#222"></div>
<div style="left:0;top:967px;width:225px;height:0;border-top:1px dotted #888"></div>
<div style="left:106px;top:948px;width:0;height:20px;border-left:1px dotted #888"></div>
<div style="left:212px;top:948px;width:0;height:20px;border-left:1px dotted #888"></div>
<div style="left:224px;top:948px;width:0;height:20px;border-left:1px dotted #888"></div>
<div style="left:10px;top:949px;line-height:16px;color:#8a8a8a">参照图纸</div>
<div style="left:108px;top:949px;line-height:16px;color:#8a8a8a"></div>
<div style="left:225px;top:268px;width:17px;height:693px;background:#ebe9f0"></div>
<div style="left:227px;top:285px;width:14px;height:450px;background:#cdcdcd"></div>
<svg style="left:229px;top:272px" width="10" height="7" viewBox="0 0 10 7"><path d="M1 6l4-4 4 4" fill="none" stroke="#555" stroke-width="1.8"/></svg>
<svg style="left:229px;top:947px" width="10" height="7" viewBox="0 0 10 7"><path d="M1 1l4 4 4-4" fill="none" stroke="#555" stroke-width="1.8"/></svg>
<div style="left:0px;top:960px;width:243px;height:24px;background:#ebe9f0"></div>
<div style="left:3px;top:962px;line-height:16px;color:#1a5fd0;text-decoration:underline">属性帮助</div>
<div style="left:167px;top:961px;width:73px;height:19px;background:#d9d8dc;border:1px solid #c2c2c2;box-sizing:border-box"></div>
<div style="left:167px;top:962px;width:73px;line-height:17px;text-align:center;color:#8a8a8a">应用</div>
<div style="left:243px;top:148px;width:3px;height:836px;background:#cfcfcf"></div>
<div style="left:246px;top:149px;width:844px;height:20px;background:#cfcfcf"></div>
<div style="left:247px;top:149px;width:126px;height:20px;background:#ebe9f0"></div>
<svg style="left:251px;top:151px" width="17" height="16" viewBox="0 0 17 16"><path d="M2 7l6-5 7 5v7l-7 2-6-2z" fill="#e6e6e6" stroke="#777" stroke-width="1"/><path d="M2 7l7 2 6-2M9 9v7" fill="none" stroke="#777"/></svg>
<div style="left:273px;top:150px;line-height:16px;color:#222">{三维}</div>
<svg style="left:1075px;top:154px" width="11" height="9" viewBox="0 0 11 9"><path d="M1 1h9" stroke="#222" stroke-width="1.4"/><path d="M1 4h9l-4.5 5z" fill="#222"/></svg>
<div style="left:246px;top:169px;width:827px;height:796px;background:#fafafa"></div>
<div style="left:1073px;top:169px;width:17px;height:796px;background:#ebe9f0"></div>
<svg style="left:1075px;top:176px" width="12" height="8" viewBox="0 0 12 8"><path d="M1 7l5-5 5 5" fill="none" stroke="#333" stroke-width="1.8"/></svg>
<svg style="left:1075px;top:952px" width="12" height="8" viewBox="0 0 12 8"><path d="M1 1l5 5 5-5" fill="none" stroke="#333" stroke-width="1.8"/></svg>
<div style="left:1072px;top:560px;width:15px;height:17px;background:#cbcbcb"></div>
<div style="left:246px;top:965px;width:844px;height:19px;background:#ebe9f0"></div>
<div style="left:270px;top:965px;line-height:16px;color:#111;font-size:11px">1</div>
<div style="left:282px;top:964px;line-height:16px;color:#111;font-size:11px">:</div>
<div style="left:293px;top:965px;line-height:16px;color:#111;font-size:11px">100</div>
<div style="left:1090px;top:149px;width:2px;height:835px;background:#cbcbcb"></div>
<svg style="left:0;top:0" width="1844" height="1002"><clipPath id="clipL"><polygon points="314.3,702.5 560.0,614.9 650.1,784.0 404.4,871.6"/></clipPath><g clip-path="url(#clipL)"><polygon points="314.3,702.5 560.0,614.9 650.1,784.0 404.4,871.6" fill="#2c2c2c" stroke="none" stroke-width="0" stroke-linejoin="round" /><polygon points="314.3,702.5 404.4,871.6 404.4,811.6 314.3,642.5" fill="#888888" stroke="#000" stroke-width="1" stroke-linejoin="round" /><polygon points="404.4,811.6 650.1,724.0 650.1,784.0 404.4,871.6" fill="#575757" stroke="#000" stroke-width="1" stroke-linejoin="round" /><polygon points="356.0,720.9 601.8,633.3 601.8,647.7 356.0,735.3" fill="#6a6a6a" stroke="#000" stroke-width="1" stroke-linejoin="round" /><polygon points="356.0,735.3 601.8,647.7 608.8,660.8 363.0,748.3" fill="#2c2c2c" stroke="#000" stroke-width="1" stroke-linejoin="round" /><polygon points="439.7,597.7 481.5,676.2 481.5,692.6 439.7,614.2" fill="#888888" stroke="#000" stroke-width="1" stroke-linejoin="round" /><polygon points="488.5,689.2 529.8,766.9 529.8,783.4 488.5,705.7" fill="#888888" stroke="#000" stroke-width="1" stroke-linejoin="round" /><polygon points="425.9,619.2 439.7,614.2 529.8,783.4 516.0,788.3" fill="#2c2c2c" stroke="#000" stroke-width="1" stroke-linejoin="round" /></g><path d="M304.5,698.6 L563.2,606.4 L659.9,787.9 L401.2,880.1 Z M314.3,702.5 L560.0,614.9 L650.1,784.0 L404.4,871.6 Z" fill="#2b2b2b" fill-rule="evenodd" stroke="#000" stroke-width="1"/><polygon points="304.5,604.4 563.2,512.2 563.2,606.4 304.5,698.6" fill="#575757" stroke="#000" stroke-width="1" stroke-linejoin="round" /><polygon points="563.2,512.2 659.9,693.7 659.9,787.9 563.2,606.4" fill="#888888" stroke="#000" stroke-width="1" stroke-linejoin="round" /><g transform="translate(285.9,-102.5)"><clipPath id="clipR"><polygon points="314.3,702.5 560.0,614.9 650.1,784.0 404.4,871.6"/></clipPath><g clip-path="url(#clipR)"><polygon points="314.3,702.5 560.0,614.9 650.1,784.0 404.4,871.6" fill="#2c2c2c" stroke="none" stroke-width="0" stroke-linejoin="round" /><polygon points="314.3,702.5 404.4,871.6 404.4,811.6 314.3,642.5" fill="#888888" stroke="#000" stroke-width="1" stroke-linejoin="round" /><polygon points="404.4,811.6 650.1,724.0 650.1,784.0 404.4,871.6" fill="#575757" stroke="#000" stroke-width="1" stroke-linejoin="round" /><polygon points="356.0,720.9 601.8,633.3 601.8,647.7 356.0,735.3" fill="#6a6a6a" stroke="#000" stroke-width="1" stroke-linejoin="round" /><polygon points="356.0,735.3 601.8,647.7 608.8,660.8 363.0,748.3" fill="#2c2c2c" stroke="#000" stroke-width="1" stroke-linejoin="round" /><polygon points="439.7,597.7 481.5,676.2 481.5,692.6 439.7,614.2" fill="#888888" stroke="#000" stroke-width="1" stroke-linejoin="round" /><polygon points="488.5,689.2 529.8,766.9 529.8,783.4 488.5,705.7" fill="#888888" stroke="#000" stroke-width="1" stroke-linejoin="round" /><polygon points="425.9,619.2 439.7,614.2 529.8,783.4 516.0,788.3" fill="#2c2c2c" stroke="#000" stroke-width="1" stroke-linejoin="round" /></g><path d="M304.5,698.6 L563.2,606.4 L659.9,787.9 L401.2,880.1 Z M314.3,702.5 L560.0,614.9 L650.1,784.0 L404.4,871.6 Z" fill="#2b2b2b" fill-rule="evenodd" stroke="#000" stroke-width="1"/><polygon points="304.5,604.4 563.2,512.2 563.2,606.4 304.5,698.6" fill="#575757" stroke="#000" stroke-width="1" stroke-linejoin="round" /><polygon points="563.2,512.2 659.9,693.7 659.9,787.9 563.2,606.4" fill="#888888" stroke="#000" stroke-width="1" stroke-linejoin="round" /><path d="M607.5 629 l5 2.5 v15 l-5 -2.5z" fill="none" stroke="#222" stroke-width="1"/></g></svg>
<div style="left:256px;top:178px;width:259px;height:294px;background:rgba(60,40,90,0.08);border-radius:3px"></div>
<div style="left:254px;top:174px;width:255px;height:293px;background:#fafafa;border:1px solid #a0a0a0;box-sizing:border-box"></div>
<svg style="left:263px;top:182px" width="15" height="15" viewBox="0 0 15 15"><rect x="0" y="0" width="15" height="15" rx="2" fill="#1f6fe0"/><rect x="0" y="11" width="15" height="4" fill="#163f80"/><text x="4" y="10" font-size="9" font-weight="bold" fill="#fff" font-family="Liberation Sans">R</text></svg>
<div style="left:283px;top:181px;line-height:16px;color:#a0a0a0;font-size:13px">MirrorWallVi...</div>
<div style="left:389px;top:189px;width:10px;height:1px;background:#777"></div>
<div style="left:434px;top:184px;width:10px;height:10px;border:1px solid #555;box-sizing:border-box"></div>
<svg style="left:479px;top:184px" width="11" height="11" viewBox="0 0 11 11"><path d="M1 1l9 9M10 1l-9 9" stroke="#555" stroke-width="1.2"/></svg>
<div style="left:282px;top:212px;line-height:16px;font-size:13px;color:#111">墙</div>
<div style="left:330px;top:209px;width:115px;height:23px;background:#e6e5ea;border:1px solid #b5b5b5;box-sizing:border-box"></div>
<div style="left:334px;top:209px;width:97px;line-height:23px;overflow:hidden;white-space:nowrap;color:#111;font-size:13px">&nbsp;白色无机涂料 F</div>
<svg style="left:433px;top:218px" width="8" height="5" viewBox="0 0 8 5"><path d="M1 1l3 3 3-3" fill="none" stroke="#444" stroke-width="1.2"/></svg>
<div style="left:460px;top:212px;line-height:16px;font-size:13px;color:#111">垂直面</div>
<div style="left:277px;top:242px;line-height:16px;font-size:13px;color:#111">楼板</div>
<div style="left:330px;top:239px;width:115px;height:23px;background:#e6e5ea;border:1px solid #b5b5b5;box-sizing:border-box"></div>
<div style="left:334px;top:239px;width:97px;line-height:23px;overflow:hidden;white-space:nowrap;color:#111;font-size:13px">白色无机涂料 PT</div>
<svg style="left:433px;top:248px" width="8" height="5" viewBox="0 0 8 5"><path d="M1 1l3 3 3-3" fill="none" stroke="#444" stroke-width="1.2"/></svg>
<div style="left:460px;top:257px;line-height:16px;font-size:13px;color:#111">水平面</div>
<div style="left:266px;top:272px;line-height:16px;font-size:13px;color:#111">玻璃斜窗</div>
<div style="left:330px;top:268px;width:115px;height:24px;background:#e6e5ea;border:1px solid #b5b5b5;box-sizing:border-box"></div>
<div style="left:334px;top:268px;width:97px;line-height:24px;overflow:hidden;white-space:nowrap;color:#111;font-size:13px">常规 - 400mm</div>
<svg style="left:433px;top:278px" width="8" height="5" viewBox="0 0 8 5"><path d="M1 1l3 3 3-3" fill="none" stroke="#444" stroke-width="1.2"/></svg>
<div style="left:266px;top:298px;line-height:16px;font-size:13px;color:#111">基面偏离</div>
<div style="left:337px;top:298px;width:100px;height:17px;background:#eeedf0;border:1px solid #d8d8d8;border-radius:7px;box-sizing:border-box"></div>
<div style="left:345px;top:298px;line-height:17px;color:#111;font-size:13px">0</div>
<div style="left:260px;top:317px;line-height:16px;font-size:13px;color:#111">水平面类型</div>
<svg style="left:333px;top:319px" width="12" height="12" viewBox="0 0 12 12"><circle cx="6" cy="6" r="5.2" fill="#fff" stroke="#333"/><circle cx="6" cy="6" r="2.6" fill="#222"/></svg>
<div style="left:350px;top:317px;line-height:16px;font-size:13px;color:#111">楼板</div>
<svg style="left:386px;top:319px" width="12" height="12" viewBox="0 0 12 12"><circle cx="6" cy="6" r="5.2" fill="#fff" stroke="#333"/></svg>
<div style="left:403px;top:317px;line-height:16px;font-size:13px;color:#111">屋顶</div>
<div style="left:281px;top:336px;width:98px;height:22px;background:#8f6aa8;border-radius:6px"></div>
<div style="left:281px;top:336px;width:98px;line-height:22px;text-align:center;color:#fff;font-weight:bold;font-size:13px">刮大白</div>
<div style="left:383px;top:336px;width:98px;height:22px;background:#8f6aa8;border-radius:6px"></div>
<div style="left:383px;top:336px;width:98px;line-height:22px;text-align:center;color:#fff;font-weight:bold;font-size:13px">贴面</div>
<div style="left:255px;top:362px;width:253px;height:1px;background:#777"></div>
<div style="left:260px;top:376px;line-height:16px;font-size:13px;color:#111">标高</div>
<div style="left:288px;top:371px;width:63px;height:24px;background:#e5f1fb;border:1px solid #5a9ee0;box-sizing:border-box"></div>
<div style="left:292px;top:371px;width:45px;line-height:24px;overflow:hidden;white-space:nowrap;color:#111;font-size:13px">F1吊顶</div>
<svg style="left:339px;top:381px" width="8" height="5" viewBox="0 0 8 5"><path d="M1 1l3 3 3-3" fill="none" stroke="#444" stroke-width="1.2"/></svg>
<div style="left:355px;top:376px;line-height:16px;font-size:13px;color:#111">偏移</div>
<div style="left:383px;top:374px;width:49px;height:20px;background:#eeedf0;border:1px solid #d8d8d8;border-radius:7px;box-sizing:border-box"></div>
<div style="left:391px;top:374px;line-height:20px;color:#111;font-size:13px">-1000</div>
<div style="left:437px;top:374px;width:62px;height:21px;background:#8f6aa8;border-radius:6px"></div>
<div style="left:437px;top:374px;width:62px;line-height:21px;text-align:center;color:#fff;font-weight:bold;font-size:13px">裸顶喷涂</div>
<div style="left:255px;top:404px;width:253px;height:1px;background:#777"></div>
<div style="left:286px;top:413px;line-height:16px;font-size:13px;color:#111">间距:</div>
<div style="left:319px;top:412px;width:50px;height:19px;background:#eeedf0;border:1px solid #d8d8d8;border-radius:7px;box-sizing:border-box"></div>
<div style="left:327px;top:412px;line-height:19px;color:#111;font-size:13px">200</div>
<div style="left:376px;top:411px;width:97px;height:21px;background:#8f6aa8;border-radius:6px"></div>
<div style="left:376px;top:411px;width:97px;line-height:21px;text-align:center;color:#fff;font-weight:bold;font-size:13px">切片</div>
<div style="left:256px;top:437px;width:250px;height:21px;background:#8f6aa8;border-radius:6px"></div>
<div style="left:256px;top:437px;width:250px;line-height:21px;text-align:center;color:#fff;font-weight:bold;font-size:13px">刷新类型</div>
<svg style="left:326px;top:376px" width="14" height="24" viewBox="0 0 14 24"><path d="M1 1v17l4-4 3 7 3-1-3-7h6z" fill="#fff" stroke="#111" stroke-width="1"/></svg>
<svg style="left:900px;top:205px" width="170" height="130" viewBox="0 0 170 130">
<g transform="rotate(-8 80 66)">
<path fill-rule="evenodd" d="M8 66 a72 57 0 1 0 144 0 a72 57 0 1 0 -144 0 Z M26 66 a54 43 0 1 0 108 0 a54 43 0 1 0 -108 0 Z" fill="#ececee" stroke="#c4c4c8" stroke-width="1" stroke-dasharray="1.5 1"/>
</g>
<polygon points="50,33.7 93.4,17.5 95.4,43.5 47.4,59" fill="#e2e2e4" stroke="#8a8a8a"/>
<polygon points="47.4,59 95.4,43.5 112.9,79.8 68.1,94.1" fill="#d6d6d8" stroke="#8a8a8a"/>
<polygon points="93.4,17.5 112.9,79.8 95.4,43.5" fill="#e8e8ea" stroke="#8a8a8a"/>
<g fill="#8a8a8a" font-size="15" font-weight="bold" font-family="Liberation Sans"><text x="40" y="32" transform="rotate(-20 48 26)">南</text><text x="140" y="57" transform="rotate(30 148 52)">东</text><text x="12" y="96" transform="rotate(-30 20 90)">西</text><text x="98" y="126" transform="rotate(-15 106 120)">北</text></g>
<path d="M74 31 l3 -6 m3 5 l2-7 m4 6 l2-6" stroke="#666" stroke-width="1.2"/>
<path d="M70 80 l10-3 M78 62 l2 14" stroke="#666" stroke-width="1.3"/>
</svg>
<div style="left:1036px;top:343px;width:34px;height:116px;border:1.5px solid #b8b8b8;border-radius:5px;box-sizing:border-box;background:#f5f4f7"></div>
<svg style="left:1036px;top:343px" width="34" height="116" viewBox="0 0 34 116"><circle cx="28" cy="7" r="4" fill="#ddd" stroke="#999"/><path d="M26 5l4 4M30 5l-4 4" stroke="#888"/><circle cx="18" cy="32" r="9.5" fill="none" stroke="#888" stroke-width="1.3"/><circle cx="18" cy="32" r="5.5" fill="none" stroke="#888" stroke-width="1.3"/><path d="M15 52h6l-3 3z" fill="#777"/><path d="M4 58h26" stroke="#bbb"/><rect x="10" y="66" width="10" height="10" fill="#9ccc8a"/><circle cx="20" cy="77" r="4" fill="#fff" stroke="#888" stroke-width="1.3"/><path d="M23 80l3 3" stroke="#888" stroke-width="1.5"/><path d="M15 94h6l-3 3z" fill="#777"/><circle cx="28" cy="109" r="4" fill="#ddd" stroke="#999"/><path d="M25.5 109h5" stroke="#888"/></svg>
<div style="left:1092px;top:149px;width:536px;height:20px;background:#cfcfcf"></div>
<div style="left:1092px;top:149px;width:129px;height:20px;background:#fafafa"></div>
<svg style="left:1096px;top:151px" width="18" height="15" viewBox="0 0 18 15"><rect x="1" y="1" width="9" height="11" fill="#e6e2f0" stroke="#333" stroke-width="1.2"/><rect x="6" y="4" width="10" height="10" fill="#f6f6f6" stroke="#333" stroke-width="1.2"/><path d="M6 4v8" stroke="#333" stroke-dasharray="1.5 1"/></svg>
<div style="left:1121px;top:151px;line-height:16px;font-weight:bold;color:#222;font-size:12px">F1</div>
<svg style="left:1204px;top:154px" width="11" height="11" viewBox="0 0 11 11"><path d="M1 1l9 9M10 1l-9 9" stroke="#222" stroke-width="1.6"/></svg>
<svg style="left:1614px;top:154px" width="11" height="9" viewBox="0 0 11 9"><path d="M1 1h9" stroke="#222" stroke-width="1.4"/><path d="M1 4h9l-4.5 5z" fill="#222"/></svg>
<div style="left:1092px;top:169px;width:536px;height:796px;background:#fafafa"></div>
<div style="left:1611px;top:169px;width:16px;height:796px;background:#ebe9f0"></div>
<svg style="left:1613px;top:176px" width="12" height="8" viewBox="0 0 12 8"><path d="M1 7l5-5 5 5" fill="none" stroke="#333" stroke-width="1.8"/></svg>
<svg style="left:1613px;top:952px" width="12" height="8" viewBox="0 0 12 8"><path d="M1 1l5 5 5-5" fill="none" stroke="#333" stroke-width="1.8"/></svg>
<div style="left:1611px;top:560px;width:15px;height:17px;background:#cbcbcb"></div>
<div style="left:1092px;top:965px;width:536px;height:19px;background:#ebe9f0"></div>
<div style="left:1113px;top:965px;line-height:16px;color:#111;font-size:11px">1</div>
<div style="left:1125px;top:964px;line-height:16px;color:#111;font-size:11px">:</div>
<div style="left:1137px;top:965px;line-height:16px;color:#111;font-size:11px">100</div>
<div style="left:1629px;top:149px;width:2px;height:835px;background:#cbcbcb"></div>
<div style="left:1575px;top:172px;width:34px;height:116px;border:1.5px solid #b8b8b8;border-radius:5px;box-sizing:border-box;background:#f5f4f7"></div>
<svg style="left:1575px;top:172px" width="34" height="116" viewBox="0 0 34 116"><circle cx="28" cy="7" r="4" fill="#ddd" stroke="#999"/><path d="M26 5l4 4M30 5l-4 4" stroke="#888"/><circle cx="18" cy="32" r="9.5" fill="none" stroke="#888" stroke-width="1.3"/><circle cx="18" cy="32" r="5.5" fill="none" stroke="#888" stroke-width="1.3"/><path d="M15 52h6l-3 3z" fill="#777"/><path d="M4 58h26" stroke="#bbb"/><rect x="10" y="66" width="10" height="10" fill="#9ccc8a"/><circle cx="20" cy="77" r="4" fill="#fff" stroke="#888" stroke-width="1.3"/><path d="M23 80l3 3" stroke="#888" stroke-width="1.5"/><path d="M15 94h6l-3 3z" fill="#777"/><circle cx="28" cy="109" r="4" fill="#ddd" stroke="#999"/><path d="M25.5 109h5" stroke="#888"/><text x="20" y="41" font-size="9" font-weight="bold" fill="#3a7fd0" font-family="Liberation Sans">2D</text></svg>
<svg style="left:1218.5px;top:232.2px" width="50" height="50" viewBox="-25 -25 50 50"><path d="M-21.7 0 H21.7 L0 21.5 Z" fill="#111"/><circle cx="0" cy="0" r="14.6" fill="#fff" stroke="#111" stroke-width="1.4"/><path d="M-21.7 0H21.7" stroke="#111" stroke-width="1.4"/><text x="-6" y="10" font-size="10" font-family="Liberation Sans" fill="#111">E-</text><text x="-8" y="-5" font-size="8" fill="#111">-</text><text x="3" y="-4" font-size="9" fill="#111">北</text></svg>
<svg style="left:1218.4px;top:909.7px" width="50" height="50" viewBox="-25 -25 50 50"><path d="M-21.7 0 H21.7 L0 -22 Z" fill="#111"/><circle cx="0" cy="0" r="14.6" fill="#fff" stroke="#111" stroke-width="1.4"/><path d="M-21.7 0H21.7" stroke="#111" stroke-width="1.4"/><text x="-5" y="-3" font-size="10" font-family="Liberation Sans" fill="#111">E-</text><text x="-8" y="10" font-size="9" fill="#111">南</text><text x="5" y="6" font-size="8" fill="#111">-</text></svg>
<svg style="left:1092px;top:440px" width="520" height="230" viewBox="1092 440 520 230">
<rect x="1131.5" y="459.5" width="229" height="197" fill="#6a6a6a" stroke="#222"/>
<rect x="1137.5" y="465.5" width="217" height="185" fill="#9ab793" stroke="#222"/>
<path d="M1200 465.5 L1354.5 619.5 M1202.5 650.5 L1354.5 498.5" stroke="#111" stroke-width="1"/>
<path d="M1294 553v12M1288 559h12" stroke="#1a3fb0" stroke-width="2"/>
<rect x="1384.5" y="459.5" width="225" height="197" fill="#6a6a6a" stroke="#222"/>
<rect x="1390.5" y="465.5" width="216.5" height="185" fill="#9ab793" stroke="#222"/>
<path d="M1389.5 465.5 L1573 650.5 M1410 650.5 L1595 465.5" stroke="#111" stroke-width="1"/>
<path d="M1492 563v12M1486 569h12" stroke="#1a3fb0" stroke-width="2"/>
<path d="M1256 587.5h3.5v2.5c5 1.5 8 6 8.5 12.5l2 1.5v4.5h-8v1.5h-6v-1.5h-8v-4.5l2-1.5c.5-6.5 3.5-11 8.5-12.5z" fill="#0a46c8"/><g fill="#9ab793"><path d="M1256.5 591.5l1.5 2.5-1.5 1-1.5-1z"/><path d="M1253 597l-2 4 1 1 2.5-3z"/><path d="M1263 597l2 4-1 1-2.5-3z"/><path d="M1254 605l3.5-2.5 3.5 2.5z"/></g>
</svg>
<div style="left:1632px;top:149px;width:212px;height:835px;background:#fafafa"></div>
<div style="left:1632px;top:149px;width:212px;height:20px;background:#ebe9f0"></div>
<div style="left:1635px;top:150px;line-height:16px;color:#222">项目浏览器 - 刮大白</div>
<div style="left:1641px;top:184px;height:470px;border-left:1px dotted #999"></div>
<div style="left:1661px;top:204px;height:290px;border-left:1px dotted #999"></div>
<div style="left:1661px;top:664px;height:320px;border-left:1px dotted #999"></div>
<div style="left:1681px;top:204px;height:35px;border-left:1px dotted #999"></div>
<div style="left:1681px;top:264px;height:35px;border-left:1px dotted #999"></div>
<div style="left:1681px;top:324px;height:35px;border-left:1px dotted #999"></div>
<div style="left:1681px;top:384px;height:75px;border-left:1px dotted #999"></div>
<div style="left:1681px;top:504px;height:75px;border-left:1px dotted #999"></div>
<svg style="left:1637px;top:174px" width="10" height="10" viewBox="0 0 10 10"><rect x="0.5" y="0.5" width="9" height="9" rx="1" fill="#f6f5f8" stroke="#8a8a8a"/><path d="M2.2 5h5.6" stroke="#2f4f9f" stroke-width="1.3"/></svg>
<div style="left:1647px;top:179px;width:8px;border-top:1px dotted #999"></div>
<svg style="left:1653px;top:172px" width="16" height="15" viewBox="0 0 16 15"><path d="M1 5V1h4M11 1h4v4M15 10v4h-4M5 14H1v-4" fill="none" stroke="#444" stroke-width="1.2"/><rect x="4" y="4" width="8" height="7" fill="none" stroke="#444"/></svg>
<div style="left:1671px;top:170px;width:66px;height:19px;background:#e0dfe4"></div>
<div style="left:1673px;top:171px;line-height:16px;color:#111">视图 (全部)</div>
<svg style="left:1657px;top:194px" width="10" height="10" viewBox="0 0 10 10"><rect x="0.5" y="0.5" width="9" height="9" rx="1" fill="#f6f5f8" stroke="#8a8a8a"/><path d="M2.2 5h5.6" stroke="#2f4f9f" stroke-width="1.3"/></svg>
<div style="left:1667px;top:199px;width:8px;border-top:1px dotted #999"></div>
<div style="left:1679px;top:191px;line-height:16px;color:#111">楼层平面</div>
<div style="left:1681px;top:219px;width:12px;border-top:1px dotted #999"></div>
<svg style="left:1693px;top:212px" width="14" height="14" viewBox="0 0 14 14"><rect x="1" y="1" width="12" height="12" fill="#f4f4f4" stroke="#444" stroke-dasharray="1.5 1"/></svg>
<div style="left:1715px;top:211px;line-height:16px;color:#111;font-weight:bold">F1</div>
<div style="left:1681px;top:239px;width:12px;border-top:1px dotted #999"></div>
<svg style="left:1693px;top:232px" width="14" height="14" viewBox="0 0 14 14"><rect x="1" y="1" width="12" height="12" fill="#f4f4f4" stroke="#444" stroke-dasharray="1.5 1"/></svg>
<div style="left:1715px;top:231px;line-height:16px;color:#111">F2</div>
<svg style="left:1657px;top:254px" width="10" height="10" viewBox="0 0 10 10"><rect x="0.5" y="0.5" width="9" height="9" rx="1" fill="#f6f5f8" stroke="#8a8a8a"/><path d="M2.2 5h5.6" stroke="#2f4f9f" stroke-width="1.3"/></svg>
<div style="left:1667px;top:259px;width:8px;border-top:1px dotted #999"></div>
<div style="left:1679px;top:251px;line-height:16px;color:#111">天花板平面</div>
<div style="left:1681px;top:279px;width:12px;border-top:1px dotted #999"></div>
<svg style="left:1693px;top:272px" width="14" height="14" viewBox="0 0 14 14"><rect x="1" y="1" width="12" height="12" fill="#f4f4f4" stroke="#444" stroke-dasharray="1.5 1"/></svg>
<div style="left:1715px;top:271px;line-height:16px;color:#111">F1</div>
<div style="left:1681px;top:299px;width:12px;border-top:1px dotted #999"></div>
<svg style="left:1693px;top:292px" width="14" height="14" viewBox="0 0 14 14"><rect x="1" y="1" width="12" height="12" fill="#f4f4f4" stroke="#444" stroke-dasharray="1.5 1"/></svg>
<div style="left:1715px;top:291px;line-height:16px;color:#111">F2</div>
<svg style="left:1657px;top:314px" width="10" height="10" viewBox="0 0 10 10"><rect x="0.5" y="0.5" width="9" height="9" rx="1" fill="#f6f5f8" stroke="#8a8a8a"/><path d="M2.2 5h5.6" stroke="#2f4f9f" stroke-width="1.3"/></svg>
<div style="left:1667px;top:319px;width:8px;border-top:1px dotted #999"></div>
<div style="left:1679px;top:311px;line-height:16px;color:#111">三维视图</div>
<div style="left:1681px;top:339px;width:12px;border-top:1px dotted #999"></div>
<svg style="left:1693px;top:332px" width="14" height="14" viewBox="0 0 14 14"><rect x="1" y="1" width="12" height="12" fill="#f4f4f4" stroke="#444" stroke-dasharray="1.5 1"/></svg>
<div style="left:1715px;top:331px;line-height:16px;color:#111">{三维}</div>
<div style="left:1681px;top:359px;width:12px;border-top:1px dotted #999"></div>
<svg style="left:1693px;top:352px" width="14" height="14" viewBox="0 0 14 14"><rect x="1" y="1" width="12" height="12" fill="#f4f4f4" stroke="#444" stroke-dasharray="1.5 1"/></svg>
<div style="left:1715px;top:351px;line-height:16px;color:#111">轻量化视图</div>
<svg style="left:1657px;top:374px" width="10" height="10" viewBox="0 0 10 10"><rect x="0.5" y="0.5" width="9" height="9" rx="1" fill="#f6f5f8" stroke="#8a8a8a"/><path d="M2.2 5h5.6" stroke="#2f4f9f" stroke-width="1.3"/></svg>
<div style="left:1667px;top:379px;width:8px;border-top:1px dotted #999"></div>
<div style="left:1679px;top:371px;line-height:16px;color:#111">立面 (建筑立面)</div>
<div style="left:1681px;top:399px;width:12px;border-top:1px dotted #999"></div>
<svg style="left:1693px;top:392px" width="14" height="14" viewBox="0 0 14 14"><rect x="1" y="1" width="12" height="12" fill="#f4f4f4" stroke="#444" stroke-dasharray="1.5 1"/></svg>
<div style="left:1715px;top:391px;line-height:16px;color:#111">东</div>
<div style="left:1681px;top:419px;width:12px;border-top:1px dotted #999"></div>
<svg style="left:1693px;top:412px" width="14" height="14" viewBox="0 0 14 14"><rect x="1" y="1" width="12" height="12" fill="#f4f4f4" stroke="#444" stroke-dasharray="1.5 1"/></svg>
<div style="left:1715px;top:411px;line-height:16px;color:#111">北</div>
<div style="left:1681px;top:439px;width:12px;border-top:1px dotted #999"></div>
<svg style="left:1693px;top:432px" width="14" height="14" viewBox="0 0 14 14"><rect x="1" y="1" width="12" height="12" fill="#f4f4f4" stroke="#444" stroke-dasharray="1.5 1"/></svg>
<div style="left:1715px;top:431px;line-height:16px;color:#111">南</div>
<div style="left:1681px;top:459px;width:12px;border-top:1px dotted #999"></div>
<svg style="left:1693px;top:452px" width="14" height="14" viewBox="0 0 14 14"><rect x="1" y="1" width="12" height="12" fill="#f4f4f4" stroke="#444" stroke-dasharray="1.5 1"/></svg>
<div style="left:1715px;top:451px;line-height:16px;color:#111">西</div>
<svg style="left:1657px;top:474px" width="10" height="10" viewBox="0 0 10 10"><rect x="0.5" y="0.5" width="9" height="9" rx="1" fill="#f6f5f8" stroke="#8a8a8a"/><path d="M2.2 5h5.6 M5 2.2v5.6" stroke="#2f4f9f" stroke-width="1.3"/></svg>
<div style="left:1667px;top:479px;width:8px;border-top:1px dotted #999"></div>
<div style="left:1679px;top:471px;line-height:16px;color:#111">剖面 (室内剖面)</div>
<svg style="left:1657px;top:494px" width="10" height="10" viewBox="0 0 10 10"><rect x="0.5" y="0.5" width="9" height="9" rx="1" fill="#f6f5f8" stroke="#8a8a8a"/><path d="M2.2 5h5.6" stroke="#2f4f9f" stroke-width="1.3"/></svg>
<div style="left:1667px;top:499px;width:8px;border-top:1px dotted #999"></div>
<div style="left:1679px;top:491px;line-height:16px;color:#111">绘图视图 (详图)</div>
<div style="left:1681px;top:519px;width:12px;border-top:1px dotted #999"></div>
<svg style="left:1693px;top:512px" width="14" height="14" viewBox="0 0 14 14"><rect x="1" y="1" width="12" height="12" fill="#6aaee8" stroke="#444" stroke-dasharray="1.5 1"/></svg>
<div style="left:1715px;top:511px;line-height:16px;color:#111">A2施工说明一</div>
<div style="left:1681px;top:539px;width:12px;border-top:1px dotted #999"></div>
<svg style="left:1693px;top:532px" width="14" height="14" viewBox="0 0 14 14"><rect x="1" y="1" width="12" height="12" fill="#6aaee8" stroke="#444" stroke-dasharray="1.5 1"/></svg>
<div style="left:1715px;top:531px;line-height:16px;color:#111">A2施工说明三</div>
<div style="left:1681px;top:559px;width:12px;border-top:1px dotted #999"></div>
<svg style="left:1693px;top:552px" width="14" height="14" viewBox="0 0 14 14"><rect x="1" y="1" width="12" height="12" fill="#6aaee8" stroke="#444" stroke-dasharray="1.5 1"/></svg>
<div style="left:1715px;top:551px;line-height:16px;color:#111">A2施工说明二</div>
<div style="left:1681px;top:579px;width:12px;border-top:1px dotted #999"></div>
<svg style="left:1693px;top:572px" width="14" height="14" viewBox="0 0 14 14"><rect x="1" y="1" width="12" height="12" fill="#f4f4f4" stroke="#444" stroke-dasharray="1.5 1"/></svg>
<div style="left:1715px;top:571px;line-height:16px;color:#111">材料构造做法表</div>
<svg style="left:1637px;top:594px" width="10" height="10" viewBox="0 0 10 10"><rect x="0.5" y="0.5" width="9" height="9" rx="1" fill="#f6f5f8" stroke="#8a8a8a"/><path d="M2.2 5h5.6 M5 2.2v5.6" stroke="#2f4f9f" stroke-width="1.3"/></svg>
<div style="left:1647px;top:599px;width:8px;border-top:1px dotted #999"></div>
<svg style="left:1653px;top:591px" width="17" height="17" viewBox="0 0 17 17"><rect x="1" y="1" width="15" height="15" rx="1" fill="#f4f4f6" stroke="#444" stroke-width="1.3"/><path d="M1.5 3h14" stroke="#777" stroke-width="1.6"/><rect x="3" y="5.5" width="3.5" height="3" fill="#666"/><circle cx="4.7" cy="12" r="1.7" fill="#777"/><path d="M8 6.5h6M8 8.5h5M8 11h6M8 13h4" stroke="#666"/></svg>
<div style="left:1674px;top:591px;line-height:16px;color:#111">图例</div>
<svg style="left:1637px;top:614px" width="10" height="10" viewBox="0 0 10 10"><rect x="0.5" y="0.5" width="9" height="9" rx="1" fill="#f6f5f8" stroke="#8a8a8a"/><path d="M2.2 5h5.6 M5 2.2v5.6" stroke="#2f4f9f" stroke-width="1.3"/></svg>
<div style="left:1647px;top:619px;width:8px;border-top:1px dotted #999"></div>
<svg style="left:1653px;top:611px" width="17" height="17" viewBox="0 0 17 17"><rect x="1" y="2" width="15" height="12" rx="1" fill="#f4f4f6" stroke="#444" stroke-width="1.3"/><path d="M1.5 4h14" stroke="#555" stroke-width="2"/><path d="M2 7.5h13M2 10.5h13M5.5 5v8" stroke="#999"/></svg>
<div style="left:1674px;top:611px;line-height:16px;color:#111">明细表/数量 (全部)</div>
<svg style="left:1637px;top:634px" width="10" height="10" viewBox="0 0 10 10"><rect x="0.5" y="0.5" width="9" height="9" rx="1" fill="#f6f5f8" stroke="#8a8a8a"/><path d="M2.2 5h5.6 M5 2.2v5.6" stroke="#2f4f9f" stroke-width="1.3"/></svg>
<div style="left:1647px;top:639px;width:8px;border-top:1px dotted #999"></div>
<svg style="left:1653px;top:631px" width="17" height="17" viewBox="0 0 17 17"><path d="M1 1h11l4 4v11H1z" fill="#f4f4f6" stroke="#444" stroke-width="1.3"/><path d="M3.5 12V5h6v3h-3v4z" fill="none" stroke="#888" stroke-width="1.2"/><path d="M13 11v3" stroke="#888"/></svg>
<div style="left:1674px;top:631px;line-height:16px;color:#111">图纸 (全部)</div>
<svg style="left:1637px;top:654px" width="10" height="10" viewBox="0 0 10 10"><rect x="0.5" y="0.5" width="9" height="9" rx="1" fill="#f6f5f8" stroke="#8a8a8a"/><path d="M2.2 5h5.6" stroke="#2f4f9f" stroke-width="1.3"/></svg>
<div style="left:1647px;top:659px;width:8px;border-top:1px dotted #999"></div>
<svg style="left:1653px;top:651px" width="17" height="17" viewBox="0 0 17 17"><path d="M2 1h6v6h-6zM2 9h9V1h5v15H2z" fill="#f0eef4" stroke="#444" stroke-width="1.3"/></svg>
<div style="left:1674px;top:651px;line-height:16px;color:#111">族</div>
<svg style="left:1657px;top:674px" width="10" height="10" viewBox="0 0 10 10"><rect x="0.5" y="0.5" width="9" height="9" rx="1" fill="#f6f5f8" stroke="#8a8a8a"/><path d="M2.2 5h5.6 M5 2.2v5.6" stroke="#2f4f9f" stroke-width="1.3"/></svg>
<div style="left:1667px;top:679px;width:8px;border-top:1px dotted #999"></div>
<div style="left:1679px;top:671px;line-height:16px;color:#111">分析链接</div>
<svg style="left:1657px;top:694px" width="10" height="10" viewBox="0 0 10 10"><rect x="0.5" y="0.5" width="9" height="9" rx="1" fill="#f6f5f8" stroke="#8a8a8a"/><path d="M2.2 5h5.6 M5 2.2v5.6" stroke="#2f4f9f" stroke-width="1.3"/></svg>
<div style="left:1667px;top:699px;width:8px;border-top:1px dotted #999"></div>
<div style="left:1679px;top:691px;line-height:16px;color:#111">坡道</div>
<svg style="left:1657px;top:714px" width="10" height="10" viewBox="0 0 10 10"><rect x="0.5" y="0.5" width="9" height="9" rx="1" fill="#f6f5f8" stroke="#8a8a8a"/><path d="M2.2 5h5.6 M5 2.2v5.6" stroke="#2f4f9f" stroke-width="1.3"/></svg>
<div style="left:1667px;top:719px;width:8px;border-top:1px dotted #999"></div>
<div style="left:1679px;top:711px;line-height:16px;color:#111">填充图案</div>
<svg style="left:1657px;top:734px" width="10" height="10" viewBox="0 0 10 10"><rect x="0.5" y="0.5" width="9" height="9" rx="1" fill="#f6f5f8" stroke="#8a8a8a"/><path d="M2.2 5h5.6 M5 2.2v5.6" stroke="#2f4f9f" stroke-width="1.3"/></svg>
<div style="left:1667px;top:739px;width:8px;border-top:1px dotted #999"></div>
<div style="left:1679px;top:731px;line-height:16px;color:#111">墙</div>
<svg style="left:1657px;top:754px" width="10" height="10" viewBox="0 0 10 10"><rect x="0.5" y="0.5" width="9" height="9" rx="1" fill="#f6f5f8" stroke="#8a8a8a"/><path d="M2.2 5h5.6 M5 2.2v5.6" stroke="#2f4f9f" stroke-width="1.3"/></svg>
<div style="left:1667px;top:759px;width:8px;border-top:1px dotted #999"></div>
<div style="left:1679px;top:751px;line-height:16px;color:#111">天花板</div>
<svg style="left:1657px;top:774px" width="10" height="10" viewBox="0 0 10 10"><rect x="0.5" y="0.5" width="9" height="9" rx="1" fill="#f6f5f8" stroke="#8a8a8a"/><path d="M2.2 5h5.6 M5 2.2v5.6" stroke="#2f4f9f" stroke-width="1.3"/></svg>
<div style="left:1667px;top:779px;width:8px;border-top:1px dotted #999"></div>
<div style="left:1679px;top:771px;line-height:16px;color:#111">屋顶</div>
<svg style="left:1657px;top:794px" width="10" height="10" viewBox="0 0 10 10"><rect x="0.5" y="0.5" width="9" height="9" rx="1" fill="#f6f5f8" stroke="#8a8a8a"/><path d="M2.2 5h5.6 M5 2.2v5.6" stroke="#2f4f9f" stroke-width="1.3"/></svg>
<div style="left:1667px;top:799px;width:8px;border-top:1px dotted #999"></div>
<div style="left:1679px;top:791px;line-height:16px;color:#111">幕墙嵌板</div>
<svg style="left:1657px;top:814px" width="10" height="10" viewBox="0 0 10 10"><rect x="0.5" y="0.5" width="9" height="9" rx="1" fill="#f6f5f8" stroke="#8a8a8a"/><path d="M2.2 5h5.6 M5 2.2v5.6" stroke="#2f4f9f" stroke-width="1.3"/></svg>
<div style="left:1667px;top:819px;width:8px;border-top:1px dotted #999"></div>
<div style="left:1679px;top:811px;line-height:16px;color:#111">幕墙竖梃</div>
<svg style="left:1657px;top:834px" width="10" height="10" viewBox="0 0 10 10"><rect x="0.5" y="0.5" width="9" height="9" rx="1" fill="#f6f5f8" stroke="#8a8a8a"/><path d="M2.2 5h5.6 M5 2.2v5.6" stroke="#2f4f9f" stroke-width="1.3"/></svg>
<div style="left:1667px;top:839px;width:8px;border-top:1px dotted #999"></div>
<div style="left:1679px;top:831px;line-height:16px;color:#111">幕墙系统</div>
<svg style="left:1657px;top:854px" width="10" height="10" viewBox="0 0 10 10"><rect x="0.5" y="0.5" width="9" height="9" rx="1" fill="#f6f5f8" stroke="#8a8a8a"/><path d="M2.2 5h5.6 M5 2.2v5.6" stroke="#2f4f9f" stroke-width="1.3"/></svg>
<div style="left:1667px;top:859px;width:8px;border-top:1px dotted #999"></div>
<div style="left:1679px;top:851px;line-height:16px;color:#111">栏杆扶手</div>
<svg style="left:1657px;top:874px" width="10" height="10" viewBox="0 0 10 10"><rect x="0.5" y="0.5" width="9" height="9" rx="1" fill="#f6f5f8" stroke="#8a8a8a"/><path d="M2.2 5h5.6 M5 2.2v5.6" stroke="#2f4f9f" stroke-width="1.3"/></svg>
<div style="left:1667px;top:879px;width:8px;border-top:1px dotted #999"></div>
<div style="left:1679px;top:871px;line-height:16px;color:#111">楼板</div>
<svg style="left:1657px;top:894px" width="10" height="10" viewBox="0 0 10 10"><rect x="0.5" y="0.5" width="9" height="9" rx="1" fill="#f6f5f8" stroke="#8a8a8a"/><path d="M2.2 5h5.6 M5 2.2v5.6" stroke="#2f4f9f" stroke-width="1.3"/></svg>
<div style="left:1667px;top:899px;width:8px;border-top:1px dotted #999"></div>
<div style="left:1679px;top:891px;line-height:16px;color:#111">楼梯</div>
<svg style="left:1657px;top:914px" width="10" height="10" viewBox="0 0 10 10"><rect x="0.5" y="0.5" width="9" height="9" rx="1" fill="#f6f5f8" stroke="#8a8a8a"/><path d="M2.2 5h5.6 M5 2.2v5.6" stroke="#2f4f9f" stroke-width="1.3"/></svg>
<div style="left:1667px;top:919px;width:8px;border-top:1px dotted #999"></div>
<div style="left:1679px;top:911px;line-height:16px;color:#111">注释符号</div>
<svg style="left:1657px;top:934px" width="10" height="10" viewBox="0 0 10 10"><rect x="0.5" y="0.5" width="9" height="9" rx="1" fill="#f6f5f8" stroke="#8a8a8a"/><path d="M2.2 5h5.6 M5 2.2v5.6" stroke="#2f4f9f" stroke-width="1.3"/></svg>
<div style="left:1667px;top:939px;width:8px;border-top:1px dotted #999"></div>
<div style="left:1679px;top:931px;line-height:16px;color:#111">电缆桥架</div>
<svg style="left:1657px;top:954px" width="10" height="10" viewBox="0 0 10 10"><rect x="0.5" y="0.5" width="9" height="9" rx="1" fill="#f6f5f8" stroke="#8a8a8a"/><path d="M2.2 5h5.6 M5 2.2v5.6" stroke="#2f4f9f" stroke-width="1.3"/></svg>
<div style="left:1667px;top:959px;width:8px;border-top:1px dotted #999"></div>
<div style="left:1679px;top:951px;line-height:16px;color:#111">窗</div>
<svg style="left:1657px;top:974px" width="10" height="10" viewBox="0 0 10 10"><rect x="0.5" y="0.5" width="9" height="9" rx="1" fill="#f6f5f8" stroke="#8a8a8a"/><path d="M2.2 5h5.6 M5 2.2v5.6" stroke="#2f4f9f" stroke-width="1.3"/></svg>
<div style="left:1667px;top:979px;width:8px;border-top:1px dotted #999"></div>
<div style="left:1679px;top:971px;line-height:16px;color:#111">管道</div>
<svg style="left:327px;top:966px" width="17" height="15" viewBox="0 0 17 15"><rect x="1" y="2" width="14" height="11" fill="#fff" stroke="#333" stroke-width="1.3"/><path d="M2 5h3v3H2zM8 5h3v3H8zM5 8h3v3H5zM11 8h3v3h-3z" fill="#666"/></svg>
<svg style="left:348px;top:966px" width="17" height="15" viewBox="0 0 17 15"><path d="M1 6l4-4h10v8l-4 4H1z" fill="#a9d4f5" stroke="#1f6fc0" stroke-width="1.2"/><path d="M1 6h10v8M11 6l4-4" fill="none" stroke="#1f6fc0" stroke-width="1.2"/></svg>
<svg style="left:367px;top:966px" width="17" height="15" viewBox="0 0 17 15"><circle cx="6" cy="6" r="3.5" fill="#f5d030" stroke="#c89000"/><path d="M6 0v2M0 6h2M10 6h2M2 2l1.5 1.5M10 2l-1.5 1.5M2 10l1.5-1.5" stroke="#e0a000"/><path d="M9 9l5 5M14 9l-5 5" stroke="#d02020" stroke-width="2"/></svg>
<svg style="left:390px;top:966px" width="17" height="15" viewBox="0 0 17 15"><circle cx="6" cy="6" r="4.5" fill="#d8ecfb" stroke="#3a86d0" stroke-width="1.2"/><path d="M1 13h8" stroke="#333" stroke-width="1.4"/><path d="M9 8l5 5M14 8l-5 5" stroke="#d02020" stroke-width="2"/></svg>
<svg style="left:409px;top:966px" width="17" height="15" viewBox="0 0 17 15"><path d="M1 5l4-2h4l3 3-1 5H4z" fill="#eee" stroke="#555"/><circle cx="13" cy="9" r="3" fill="#cfe6fb" stroke="#3a86d0"/><path d="M12 12h2v2h-2z" fill="#3a86d0"/></svg>
<svg style="left:430px;top:966px" width="17" height="15" viewBox="0 0 17 15"><path d="M2 12V5h9v7" fill="none" stroke="#1f6fc0" stroke-width="1.6"/><path d="M0 10h4" stroke="#333"/><path d="M8 8l6 6M14 8l-6 6" stroke="#d02020" stroke-width="2"/></svg>
<svg style="left:451px;top:966px" width="17" height="15" viewBox="0 0 17 15"><path d="M2 12V5h9v7" fill="none" stroke="#1f6fc0" stroke-width="1.6"/><path d="M0 10h4" stroke="#333"/><circle cx="13" cy="8" r="3" fill="#cfe6fb" stroke="#3a86d0"/><path d="M12 11h2v3h-2z" fill="#3a86d0"/></svg>
<svg style="left:472px;top:966px" width="17" height="15" viewBox="0 0 17 15"><path d="M1 8l7-6 7 6v6H1z" fill="#f4f4f4" stroke="#444" stroke-width="1.2"/><rect x="9" y="9" width="6" height="5" fill="#2a9a8a"/></svg>
<svg style="left:493px;top:966px" width="17" height="15" viewBox="0 0 17 15"><path d="M1 6c2-2 5-2 6 1 1-3 5-3 7 0M2 7c0 3 4 4 5 0M8 7c1 3 5 3 5 0" fill="none" stroke="#333" stroke-width="1.2"/></svg>
<svg style="left:518px;top:966px" width="10" height="15" viewBox="0 0 10 15"><circle cx="4" cy="6" r="3" fill="#cfe6fb" stroke="#3a86d0"/><path d="M3 9h2v3H3z" fill="#3a86d0"/></svg>
<svg style="left:535px;top:966px" width="17" height="15" viewBox="0 0 17 15"><rect x="1" y="4" width="13" height="9" fill="#fff" stroke="#222" stroke-width="1.4"/><circle cx="10" cy="9" r="2.5" fill="none" stroke="#222"/><path d="M3 2h3" stroke="#222"/></svg>
<svg style="left:556px;top:966px" width="17" height="15" viewBox="0 0 17 15"><path d="M1 14V6l5-4 5 4v8" fill="none" stroke="#b02020" stroke-width="1.4"/><path d="M3 7v7M6 5v9M9 7v7" stroke="#555"/><circle cx="12" cy="6" r="3" fill="#f5c030"/></svg>
<svg style="left:578px;top:966px" width="17" height="15" viewBox="0 0 17 15"><path d="M1 6l4-3h9v8l-4 3H1z" fill="#ddd" stroke="#444" stroke-width="1.2"/><path d="M1 6h9v8M10 6l4-3" fill="none" stroke="#444"/></svg>
<svg style="left:598px;top:966px" width="17" height="15" viewBox="0 0 17 15"><path d="M1 1v13M16 1v13M1 4h15" stroke="#333" stroke-width="1.2" stroke-dasharray="2 1"/><rect x="9" y="8" width="6" height="5" fill="#555"/></svg>
<svg style="left:623px;top:968px" width="8" height="10" viewBox="0 0 8 10"><path d="M6 1L2 5l4 4" fill="none" stroke="#333" stroke-width="1.8"/></svg>
<svg style="left:1059px;top:968px" width="8" height="10" viewBox="0 0 8 10"><path d="M2 1l4 4-4 4" fill="none" stroke="#333" stroke-width="1.8"/></svg>
<div style="left:632px;top:972px;width:424px;height:1px;background:#d6d3dc"></div>
<div style="left:632px;top:975px;width:424px;height:1px;background:#d6d3dc"></div>
<div style="left:836px;top:966px;width:17px;height:15px;background:#cacaca"></div>
<svg style="left:1077px;top:972px" width="9" height="9" viewBox="0 0 9 9"><g fill="#aaa"><rect x="6" y="0" width="2" height="2"/><rect x="3" y="3" width="2" height="2"/><rect x="6" y="3" width="2" height="2"/><rect x="0" y="6" width="2" height="2"/><rect x="3" y="6" width="2" height="2"/><rect x="6" y="6" width="2" height="2"/></g></svg>
<svg style="left:1172px;top:966px" width="17" height="15" viewBox="0 0 17 15"><rect x="1" y="2" width="14" height="11" fill="#fff" stroke="#333" stroke-width="1.3"/><path d="M2 5h3v3H2zM8 5h3v3H8zM5 8h3v3H5zM11 8h3v3h-3z" fill="#666"/></svg>
<svg style="left:1193px;top:966px" width="17" height="15" viewBox="0 0 17 15"><path d="M1 6l4-4h10v8l-4 4H1z" fill="#a9d4f5" stroke="#1f6fc0" stroke-width="1.2"/><path d="M1 6h10v8M11 6l4-4" fill="none" stroke="#1f6fc0" stroke-width="1.2"/></svg>
<svg style="left:1213px;top:966px" width="17" height="15" viewBox="0 0 17 15"><circle cx="6" cy="6" r="3.5" fill="#f5d030" stroke="#c89000"/><path d="M6 0v2M0 6h2M10 6h2M2 2l1.5 1.5M10 2l-1.5 1.5M2 10l1.5-1.5" stroke="#e0a000"/><path d="M9 9l5 5M14 9l-5 5" stroke="#d02020" stroke-width="2"/></svg>
<svg style="left:1235px;top:966px" width="17" height="15" viewBox="0 0 17 15"><circle cx="6" cy="6" r="4.5" fill="#d8ecfb" stroke="#3a86d0" stroke-width="1.2"/><path d="M1 13h8" stroke="#333" stroke-width="1.4"/><path d="M9 8l5 5M14 8l-5 5" stroke="#d02020" stroke-width="2"/></svg>
<svg style="left:1256px;top:966px" width="17" height="15" viewBox="0 0 17 15"><path d="M2 12V5h9v7" fill="none" stroke="#1f6fc0" stroke-width="1.6"/><path d="M0 10h4" stroke="#333"/><path d="M8 8l6 6M14 8l-6 6" stroke="#d02020" stroke-width="2"/></svg>
<svg style="left:1277px;top:966px" width="17" height="15" viewBox="0 0 17 15"><path d="M2 12V5h9v7" fill="none" stroke="#1f6fc0" stroke-width="1.6"/><path d="M0 10h4" stroke="#333"/><circle cx="13" cy="8" r="3" fill="#cfe6fb" stroke="#3a86d0"/><path d="M12 11h2v3h-2z" fill="#3a86d0"/></svg>
<svg style="left:1298px;top:966px" width="17" height="15" viewBox="0 0 17 15"><path d="M1 6c2-2 5-2 6 1 1-3 5-3 7 0M2 7c0 3 4 4 5 0M8 7c1 3 5 3 5 0" fill="none" stroke="#333" stroke-width="1.2"/></svg>
<svg style="left:1322px;top:966px" width="10" height="15" viewBox="0 0 10 15"><circle cx="4" cy="6" r="3" fill="#cfe6fb" stroke="#3a86d0"/><path d="M3 9h2v3H3z" fill="#3a86d0"/></svg>
<svg style="left:1340px;top:966px" width="17" height="15" viewBox="0 0 17 15"><rect x="1" y="4" width="13" height="9" fill="#fff" stroke="#222" stroke-width="1.4"/><circle cx="10" cy="9" r="2.5" fill="none" stroke="#222"/><path d="M3 2h3" stroke="#222"/></svg>
<svg style="left:1360px;top:966px" width="17" height="15" viewBox="0 0 17 15"><path d="M1 14V6l5-4 5 4v8" fill="none" stroke="#b02020" stroke-width="1.4"/><path d="M3 7v7M6 5v9M9 7v7" stroke="#555"/><circle cx="12" cy="6" r="3" fill="#f5c030"/></svg>
<svg style="left:1381px;top:966px" width="17" height="15" viewBox="0 0 17 15"><path d="M1 1v13M16 1v13M1 4h15" stroke="#333" stroke-width="1.2" stroke-dasharray="2 1"/><rect x="9" y="8" width="6" height="5" fill="#555"/></svg>
<svg style="left:1406px;top:968px" width="8" height="10" viewBox="0 0 8 10"><path d="M6 1L2 5l4 4" fill="none" stroke="#333" stroke-width="1.8"/></svg>
<svg style="left:1597px;top:968px" width="8" height="10" viewBox="0 0 8 10"><path d="M2 1l4 4-4 4" fill="none" stroke="#333" stroke-width="1.8"/></svg>
<div style="left:1415px;top:972px;width:179px;height:1px;background:#d6d3dc"></div>
<div style="left:1415px;top:975px;width:179px;height:1px;background:#d6d3dc"></div>
<div style="left:1498px;top:966px;width:17px;height:15px;background:#cacaca"></div>
<svg style="left:1616px;top:972px" width="9" height="9" viewBox="0 0 9 9"><g fill="#aaa"><rect x="6" y="0" width="2" height="2"/><rect x="3" y="3" width="2" height="2"/><rect x="6" y="3" width="2" height="2"/><rect x="0" y="6" width="2" height="2"/><rect x="3" y="6" width="2" height="2"/><rect x="6" y="6" width="2" height="2"/></g></svg>
<div style="left:0px;top:984px;width:1844px;height:18px;background:#cfcfcf"></div>
<div style="left:940px;top:988px;width:204px;height:14px;background:#fafafa"></div>
<svg style="left:1128px;top:992px" width="10" height="6" viewBox="0 0 10 6"><path d="M1 1l4 4 4-4" fill="none" stroke="#888" stroke-width="1.2"/></svg>
<svg style="left:916px;top:987px" width="17" height="15" viewBox="0 0 17 15"><rect x="1" y="6" width="6" height="9" fill="#3a78d0"/><rect x="4" y="1" width="6" height="7" fill="#4aa05a"/><path d="M12 4v11M10 6l2-3 2 3" stroke="#333" stroke-width="1.4" fill="none"/></svg>
<svg style="left:1153px;top:987px" width="16" height="15" viewBox="0 0 16 15"><path d="M3 14l5-8h6l-2-5" stroke="#aaa" stroke-width="2.5" fill="none"/></svg>
<div style="left:1174px;top:989px;line-height:16px;color:#111">:0</div>
<svg style="left:1206px;top:988px" width="17" height="14" viewBox="0 0 17 14"><rect x="1" y="1" width="15" height="13" fill="#fff" stroke="#333" stroke-width="1.2"/><path d="M4 5h2M8 5h6M4 8h2M8 8h6M4 11h2M8 11h6" stroke="#333"/></svg>
<div style="left:1234px;top:988px;width:15px;height:14px;background:#9a9a9a"></div>
<div style="left:1255px;top:988px;width:204px;height:14px;background:#fafafa"></div>
<div style="left:1258px;top:989px;line-height:16px;color:#8a8a8a">主模型</div>
<svg style="left:1443px;top:992px" width="10" height="6" viewBox="0 0 10 6"><path d="M1 1l4 4 4-4" fill="none" stroke="#888" stroke-width="1.2"/></svg>
<svg style="left:1640px;top:986px" width="18" height="16" viewBox="0 0 18 16"><path d="M1 5c0-2 2-3 4-3h2c2 0 3 1 3 3s-1 3-3 3H5C3 8 1 7 1 5zM6 5c0-2 2-3 4-3h2c2 0 3 1 3 3" fill="none" stroke="#e0a800" stroke-width="2"/><path d="M9 7v8l2-2 1.5 3 1.2-.6-1.5-3h3z" fill="#fff" stroke="#222" stroke-width="0.9"/></svg>
<svg style="left:1664px;top:986px" width="18" height="16" viewBox="0 0 18 16"><path d="M1 12l5-5h10M3 9l5-5h8M2 15l5-5h9" fill="none" stroke="#2a78d0" stroke-width="1.5"/><path d="M9 7v8l2-2 1.5 3 1.2-.6-1.5-3h3z" fill="#fff" stroke="#222" stroke-width="0.9"/></svg>
<svg style="left:1690px;top:986px" width="18" height="16" viewBox="0 0 18 16"><rect x="2" y="1" width="8" height="4" fill="#e8902a" stroke="#a05010"/><rect x="4" y="5" width="4" height="5" fill="#f0b060" stroke="#a05010"/><path d="M1 11h10" stroke="#d03020" stroke-width="1.5"/><path d="M9 7v8l2-2 1.5 3 1.2-.6-1.5-3h3z" fill="#fff" stroke="#222" stroke-width="0.9"/></svg>
<svg style="left:1716px;top:986px" width="18" height="16" viewBox="0 0 18 16"><path d="M2 3l6-2v14l-6-2z" fill="#5a9ee0" stroke="#2a6ab0"/><path d="M8 1h4v13" fill="none" stroke="#2a6ab0"/><path d="M9 7v8l2-2 1.5 3 1.2-.6-1.5-3h3z" fill="#fff" stroke="#222" stroke-width="0.9"/></svg>
<svg style="left:1742px;top:986px" width="20" height="16" viewBox="0 0 20 16"><path d="M6 1v10M1 6h10M6 1l-2 2M6 1l2 2M1 6l2-2M1 6l2 2M11 6l-2-2M11 6l-2 2M6 11l-2-2M6 11l2-2" stroke="#222" stroke-width="1.2"/><path d="M11 8v8l2-2 1.5 3 1.2-.6-1.5-3h3z" fill="#fff" stroke="#222" stroke-width="0.9"/></svg>
<svg style="left:1768px;top:986px" width="18" height="16" viewBox="0 0 18 16"><circle cx="9" cy="8" r="5.5" fill="none" stroke="#b8b8b8" stroke-width="3" stroke-dasharray="2 1.2"/></svg>
<svg style="left:1792px;top:986px" width="18" height="16" viewBox="0 0 18 16"><path d="M1 2h14l-5 6v7l-3-2V8z" fill="#eee" stroke="#555" stroke-width="1.3"/></svg>
<div style="left:1811px;top:988px;line-height:16px;color:#111">:0</div>
</body></html>
